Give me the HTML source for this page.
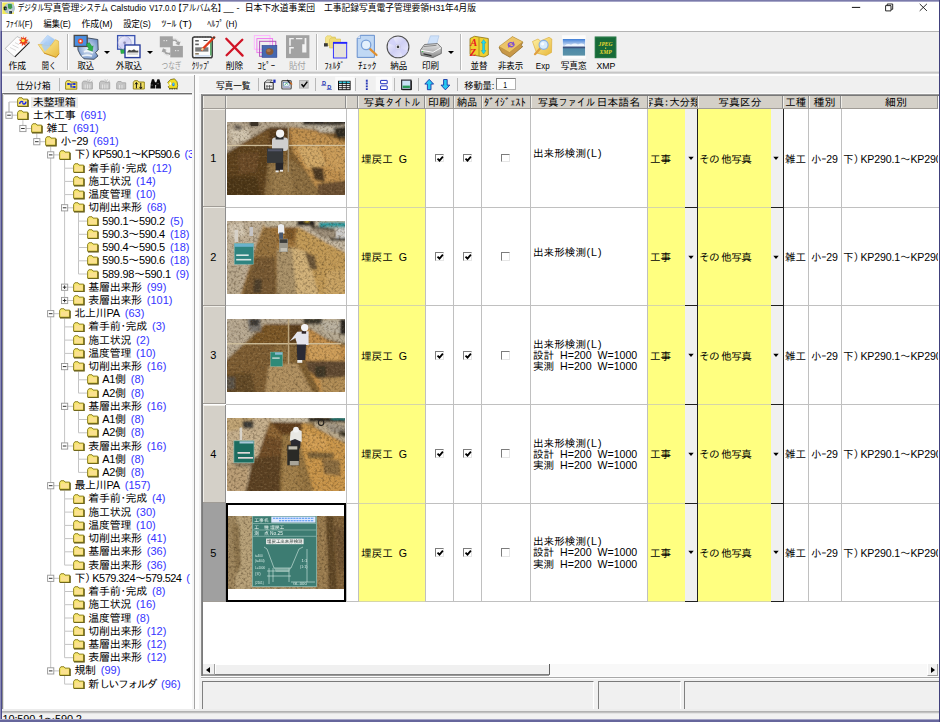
<!DOCTYPE html><html lang="ja"><head><meta charset="utf-8"><title>Calstudio</title><style>
html,body{margin:0;padding:0;}
body{width:940px;height:722px;overflow:hidden;background:#f0f0f0;position:relative;font-family:"Liberation Sans","IPAGothic",sans-serif;font-size:11px;color:#000;}
.abs{position:absolute;}
#win{position:absolute;left:0;top:0;width:940px;height:722px;overflow:hidden;background:#f0f0f0;}
#titlebar{left:0;top:0;width:940px;height:31px;background:#fff;}
#title{left:17px;top:1px;font-family:"Liberation Sans","Noto Sans CJK JP",sans-serif;font-size:9.4px;line-height:13px;white-space:nowrap;color:#000;}
.menu{top:17px;font-family:"Liberation Sans","Noto Sans CJK JP",sans-serif;font-size:8.6px;line-height:13px;white-space:nowrap;color:#000;}
.tb1{top:32px;height:40px;}
.tbl{position:absolute;top:59px;font-family:"Liberation Sans","Noto Sans CJK JP",sans-serif;font-size:9.4px;line-height:12px;white-space:nowrap;text-align:center;width:40px;margin-left:-20px;color:#000;}
.tbl.dis{color:#9a9a9a;}
.sep{position:absolute;width:1px;background:#b8b8b8;}
.tree{left:4px;top:94px;width:186px;height:615px;background:#fff;overflow:hidden;}
.tr{position:absolute;white-space:nowrap;font-size:11px;line-height:13px;height:13px;letter-spacing:-0.3px;}
.tr .c{color:#3434ff;letter-spacing:0;margin-left:5px;}
.fold{position:absolute;}
.ln{position:absolute;background:#c6c6c6;}
.box{position:absolute;width:5.700px;height:5.700px;border:1px solid #999;background:#fff;}
.box i{position:absolute;left:1px;top:2.300px;width:3.700px;height:1.100px;background:#333;}
.box b{position:absolute;left:2.300px;top:1px;width:1.100px;height:3.700px;background:#333;}
.cell{position:absolute;white-space:nowrap;font-size:10.6px;line-height:12px;}
.hd{position:absolute;top:95.500px;height:13.200px;background:#d4d0c8;border-right:1px solid #8e8e8e;border-bottom:1px solid #a09c96;box-shadow:inset 1px 0 0 #f0eee8;text-align:center;font-size:11.5px;line-height:12px;white-space:nowrap;overflow:hidden;box-sizing:border-box;}
.cb{position:absolute;width:9.200px;height:8.800px;border:1px solid #e6e6e6;border-top:1.300px solid #7c7c7c;border-left:1.300px solid #7c7c7c;background:#fff;box-sizing:border-box;}
.dd{position:absolute;width:0;height:0;border-left:2.800px solid transparent;border-right:2.800px solid transparent;border-top:3.200px solid #000;}
</style></head><body><div id="win">
<svg width="0" height="0" style="position:absolute"><defs><filter id="b1" x="-10%" y="-10%" width="120%" height="120%"><feGaussianBlur stdDeviation="0.9"/></filter><filter id="b2" x="-10%" y="-10%" width="120%" height="120%"><feGaussianBlur stdDeviation="0.6"/></filter><filter id="nz" x="0" y="0" width="100%" height="100%" color-interpolation-filters="sRGB"><feTurbulence type="fractalNoise" baseFrequency="0.42" numOctaves="2" seed="7"/><feColorMatrix type="matrix" values="0 0 0 0 0.2  0 0 0 0 0.14  0 0 0 0 0.06  1.1 0 0 0 -0.5"/></filter><filter id="nz2" x="0" y="0" width="100%" height="100%" color-interpolation-filters="sRGB"><feTurbulence type="fractalNoise" baseFrequency="0.5" numOctaves="2" seed="3"/><feColorMatrix type="matrix" values="0 0 0 0 1  0 0 0 0 0.9  0 0 0 0 0.7  0 2.0 0 0 -0.95"/></filter></defs></svg>
<div id="titlebar" class="abs"></div>
<svg class="abs" style="left:2px;top:1.500px" width="12.500" height="12.500" viewBox="2 1.500 12.500 12.500"><rect x="2.300" y="2" width="11.600" height="11.700" fill="#f2ea58"/><circle cx="9.500" cy="7.800" r="5.500" fill="#b2c6cc"/><path d="M7.900 3.600h3.800l0.600 3.600-1.800 1.600-2.400-1z" fill="#3a9a4a"/><path d="M8.200 9.500l3.600-0.600 1 3.200-2.200 1.400-2.600-1z" fill="#d8d8d8"/><rect x="3.700" y="6" width="2.900" height="3.700" rx="0.800" fill="#1c1c1c"/><path d="M9.200 10.600h2.800v2.600h-2.800z" fill="#26262a"/><rect x="9.300" y="11.200" width="1.200" height="1.300" fill="#1a8aa0"/><rect x="5" y="7.300" width="1.200" height="1.600" fill="#3aa860"/></svg>
<svg class="abs" style="left:17.0px;top:-0.6px;overflow:visible" width="467.0" height="16.8"><text y="11.8" font-family="'Liberation Sans','Noto Sans CJK JP',sans-serif" font-size="8.80" fill="#000"><tspan x="0.7" textLength="26.3" lengthAdjust="spacingAndGlyphs">デジタル</tspan><tspan x="26.8" textLength="35.5" lengthAdjust="spacingAndGlyphs">写真管理</tspan><tspan x="62.3" textLength="28.7" lengthAdjust="spacingAndGlyphs">システム</tspan><tspan x="93.4" textLength="35.6" lengthAdjust="spacingAndGlyphs">Calstudio</tspan><tspan x="132.2" textLength="26.5" lengthAdjust="spacingAndGlyphs">V17.0.0</tspan><tspan x="157.6" textLength="50.4" lengthAdjust="spacingAndGlyphs">【アルバム名】</tspan><tspan x="206.4" textLength="10.2" lengthAdjust="spacingAndGlyphs">__</tspan><tspan x="219.5" textLength="3.0" lengthAdjust="spacingAndGlyphs">-</tspan><tspan x="227.7" textLength="70.3" lengthAdjust="spacingAndGlyphs">日本下水道事業団</tspan><tspan x="307.0" textLength="105.0" lengthAdjust="spacingAndGlyphs">工事記録写真電子管理要領</tspan><tspan x="412.2" textLength="46.8" lengthAdjust="spacingAndGlyphs">H31年4月版</tspan></text></svg>
<svg class="abs" style="left:840px;top:0" width="100" height="16" viewBox="0 0 100 16"><path d="M11.900 7.400h8.300" stroke="#111" stroke-width="1" fill="none"/><path d="M45.600 5.600h5.400v5.300h-5.400z M47.200 5.400v-1.400h5.500v5.300h-1.500" stroke="#111" stroke-width="0.900" fill="none"/><path d="M79.700 3.900l7.200 7M86.900 3.900l-7.200 7" stroke="#111" stroke-width="0.900" fill="none"/></svg>
<svg class="abs" style="left:5.0px;top:15.4px;overflow:visible" width="239.0" height="16.8"><text y="11.8" font-family="'Liberation Sans','Noto Sans CJK JP',sans-serif" font-size="8.80" fill="#000"><tspan x="0.8" textLength="26.7" lengthAdjust="spacingAndGlyphs">ﾌｧｲﾙ(F)</tspan><tspan x="38.6" textLength="27.2" lengthAdjust="spacingAndGlyphs">編集(E)</tspan><tspan x="76.5" textLength="31.0" lengthAdjust="spacingAndGlyphs">作成(M)</tspan><tspan x="118.2" textLength="27.6" lengthAdjust="spacingAndGlyphs">設定(S)</tspan><tspan x="156.5" textLength="30.2" lengthAdjust="spacingAndGlyphs">ﾂｰﾙ (T)</tspan><tspan x="202.2" textLength="30.0" lengthAdjust="spacingAndGlyphs">ﾍﾙﾌﾟ (H)</tspan></text></svg>
<div class="abs" style="left:0;top:31px;width:940px;height:1px;background:#b4b4b4"></div>
<div class="abs" style="left:0;top:32px;width:940px;height:40px;background:#f0f0f0"></div>
<div class="abs" style="left:0;top:71px;width:940px;height:1px;background:#dedede"></div>
<div class="abs" style="left:0;top:72px;width:940px;height:1px;background:#c6c6c6"></div>
<div class="abs" style="left:0;top:73px;width:940px;height:1px;background:#d6d6d6"></div>
<svg class="abs" style="left:0;top:32px" width="940" height="40" viewBox="0 32 940 40"><defs><linearGradient id="gy" x1="0" y1="0" x2="1" y2="1"><stop offset="0" stop-color="#fff3a8"/><stop offset="1" stop-color="#e8b83a"/></linearGradient><linearGradient id="gb" x1="0" y1="0" x2="1" y2="1"><stop offset="0" stop-color="#dcebff"/><stop offset="1" stop-color="#7fb2ea"/></linearGradient><linearGradient id="gcd" x1="0" y1="0" x2="1" y2="1"><stop offset="0" stop-color="#ffffff"/><stop offset="0.5" stop-color="#cfcff4"/><stop offset="1" stop-color="#f4f4ff"/></linearGradient><linearGradient id="gsky" x1="0" y1="0" x2="0" y2="1"><stop offset="0" stop-color="#3f7fd8"/><stop offset="0.42" stop-color="#d8e4f4"/><stop offset="0.5" stop-color="#3a4a78"/><stop offset="0.6" stop-color="#4f8aa8"/><stop offset="1" stop-color="#5a92a8"/></linearGradient><linearGradient id="gpr" x1="0" y1="0" x2="0" y2="1"><stop offset="0" stop-color="#e8e8e8"/><stop offset="1" stop-color="#8a8a8a"/></linearGradient><radialGradient id="gcl" cx="0.5" cy="0.5" r="0.6"><stop offset="0" stop-color="#e6eef8"/><stop offset="1" stop-color="#6a8ec6"/></radialGradient></defs><g><path d="M15.2 57.2 L29.6 43 L29.2 41.6 L14 56 Z" fill="#101010"/><path d="M5.2 48.5 L17.1 36.6 L29 42.3 L14.3 56.6 Z" fill="#fdfdfd" stroke="#9a9a9a" stroke-width="0.6"/><path d="M10 47.5l6 3M12.5 45l6 3M15 42.6l4 2" stroke="#c8c8c8" stroke-width="0.7"/><path d="M23.1 35.6l1 2.6 2.4-1.4-.6 2.7 2.8.2-2.2 1.8 1.8 2.1-2.8-.2.1 2.8-1.9-2-1.9 2 .1-2.8-2.8.3 1.8-2.2-2.2-1.7 2.8-.3-.6-2.7 2.4 1.4z" fill="#e8401a"/><circle cx="23.1" cy="40.6" r="1.7" fill="#ffe040"/></g><g><path d="M40.3 43.6 L47.6 35.2 L54.7 39.7 L47 50.6 Z" fill="url(#gb)" stroke="#9cc4f0" stroke-width="0.5"/><path d="M38.2 44.5 L44.1 53.1 L56.1 57.3 L59 53.8 L58.5 41.1 L55.4 39.7 L50.8 45.8 Z" fill="url(#gy)" stroke="#d8a830" stroke-width="0.6"/><path d="M41.5 45.5 L46.5 41.2 L50.5 45.9 L45 51.5 Z" fill="#a8ccf4" opacity="0.85"/><path d="M44.1 53.1 L56.1 57.3 L59 53.8" fill="none" stroke="#c89020" stroke-width="0.9"/></g><g><path d="M77.6 40 L88 38 L97.8 39.5 L98.2 50 L95.5 52.5 L98 56 L94 59.3 L84 58.8 L80.5 55 L78 50 Z" fill="url(#gcl)" stroke="#3a4658" stroke-width="0.9"/><path d="M84 52c3-2 6-1 9 1M82 56c3-1 7-1 10 0" stroke="#f4f8fc" stroke-width="1.800" fill="none" opacity="0.900"/><rect x="74.2" y="35.4" width="13" height="11" fill="#4a8ee0" stroke="#484848" stroke-width="1.3"/><circle cx="80.5" cy="41.2" r="2.6" fill="#e84a28"/><circle cx="80.5" cy="41.2" r="1.1" fill="#fff"/><path d="M86.2 44.2 L89.3 42.6 L92 46.6 L93.2 45.8 L92.4 51.2 L87.4 49.6 L88.8 48.7 Z" fill="#2cb04a" stroke="#1a7a30" stroke-width="0.4"/></g><g><rect x="117.6" y="35.6" width="17.2" height="13.6" fill="#e8ecfa" stroke="#3a52b0" stroke-width="1.3"/><circle cx="124.6" cy="42.8" r="6.6" fill="url(#gcd)" stroke="#9a9ac8" stroke-width="0.6"/><circle cx="124.6" cy="42.8" r="1.3" fill="#8a8ab0"/><path d="M120.5 49.6 L124.8 50 L124 48.2 L128.4 51.4 L125.6 55 L125.2 53.2 L121 53.6 Z" fill="#2cb04a" stroke="#1a7a30" stroke-width="0.4"/><rect x="125" y="45" width="15" height="12.6" fill="#fdfdfd" stroke="#2a3e9c" stroke-width="1.4"/><path d="M127 52.2 L129 49.8 L131.5 50.6 L134 49.2 L136 50.8 L138.3 50.4 L138.3 52.6 L127 52.6 Z" fill="#484848"/><rect x="127" y="53.4" width="11" height="1.2" fill="#c8c8c8"/></g><g fill="#a2a2a2"><rect x="159.8" y="36.3" width="13" height="11"/><rect x="170.3" y="45.9" width="12.6" height="11.5"/><path d="M171.5 39.5c3-1.8 6-.8 7.5 2.6l1.6-.6-1.4 4-3.8-1.8 1.5-.7c-1-2-3-2.4-5-1.4z" /><path d="M170.5 54.5c-3 1.600-6 .6-7.300-2.800l-1.600.6 1.400-4 3.800 1.800-1.500.7c1 2 3 2.400 5 1.400z"/></g><path d="M173.2 39.200c2.200-1 4-.2 5 2.200M168.800 54.600c-2.200 1-4 .2-5-2.200" stroke="#e4e4e4" stroke-width="1.300" fill="none"/><rect x="163.500" y="40" width="1.200" height="1.200" fill="#e4e4e4"/><rect x="166" y="40" width="1.200" height="1.200" fill="#e4e4e4"/><rect x="175" y="50" width="1.200" height="1.200" fill="#e4e4e4"/><rect x="177.500" y="50" width="1.200" height="1.200" fill="#e4e4e4"/><g><rect x="192.6" y="37" width="19.6" height="20.8" rx="1.8" fill="#fcfcfc" stroke="#3c3c3c" stroke-width="1.5"/><path d="M194 37h17" stroke="#3c3c3c" stroke-width="1.2" stroke-dasharray="0.8 0.8"/><rect x="210.2" y="41" width="1.3" height="14.500" fill="#3a9a4a"/><rect x="195.2" y="40" width="3.6" height="1.600" fill="#606060"/><rect x="195.2" y="43.600" width="3.600" height="1.600" fill="#606060"/><rect x="203.500" y="40" width="4" height="1" fill="#404040"/><rect x="195.2" y="47.3" width="13.2" height="4.300" fill="#7a7a7a"/><rect x="195.2" y="53" width="3.600" height="1.600" fill="#8a7a60"/><rect x="195" y="55.200" width="14.800" height="1.400" fill="#c8d8ee"/><path d="M214.300 37.300 L202 49.600" stroke="#e03818" stroke-width="2.200" stroke-linecap="round"/><path d="M203.300 48.300 L201.600 50" stroke="#f0d8a0" stroke-width="2"/><path d="M214.600 37 L213.400 38.200" stroke="#404040" stroke-width="2.200"/></g><path d="M226.300 38.800 L242.600 55.600 M242.300 39.800 L226.600 55.200" stroke="#d01426" stroke-width="2.300" stroke-linecap="round" fill="none"/><g fill="none"><rect x="254.300" y="35.600" width="15.700" height="13.600" stroke="#ffb0ff" stroke-width="0.900"/><rect x="256.900" y="38.600" width="15.700" height="14" stroke="#f070f0" stroke-width="0.900"/><rect x="259.600" y="41.300" width="16.200" height="15" stroke="#b050b8" stroke-width="1"/><rect x="262" y="45.300" width="14.900" height="12.200" fill="#4668b0" stroke="#2a3a8a" stroke-width="0.500"/><ellipse cx="269.600" cy="51.600" rx="3.800" ry="3.400" fill="#8a5a38"/><ellipse cx="268.600" cy="50.600" rx="2" ry="1.500" fill="#b07a50"/></g><g><rect x="286" y="35.200" width="23.400" height="22.900" fill="#a2a2a2"/><path d="M289.200 38h4.600v1.300h-3v6.500h-1.600zM296 38h6.400v1.300H296zM304.600 38h1.800v14.600h-1.800zM289.200 47h4.600v1.400h-3v5.400h-1.600zM302.200 44.300h2.400v8.300h-2.400z" fill="#f2f2f2"/></g><g><path d="M325.500 37.500 L327 35.800 L331 35.800 L332 37 L335.500 37 L335.500 45.500 L325.500 45.500 Z" fill="#f4e48a" stroke="#d8c050" stroke-width="0.500"/><path d="M329.500 39.500 L331 37.800 L335 37.800 L336 39 L340.500 39 L340.500 48 L329.500 48 Z" fill="#f0dc78" stroke="#d0b848" stroke-width="0.500"/><rect x="324" y="43.200" width="3.800" height="3.300" fill="#383838"/><rect x="333.400" y="43" width="13.300" height="15" fill="#e6e2da" stroke="#2424ff" stroke-width="0.900"/><rect x="333" y="41.900" width="14.200" height="1.700" fill="#2424ff"/></g><g><path d="M357.200 38.500 L360.400 35.300 L374.400 35.300 L374.400 57.400 L357.200 57.400 Z" fill="#c0d8f4" stroke="#5a86c8" stroke-width="0.900"/><path d="M357.200 38.500 L360.400 38.500 L360.400 35.300" fill="#e8f2ff" stroke="#5a86c8" stroke-width="0.600"/><path d="M369.600 48.600 L376.500 55" stroke="#e09030" stroke-width="2.300" stroke-linecap="round"/><circle cx="366.100" cy="44.900" r="4.700" fill="#e4f0fc" stroke="#7aa0d8" stroke-width="1.300"/></g><g><circle cx="398" cy="46.900" r="10.900" fill="url(#gcd)" stroke="#505050" stroke-width="1.100"/><path d="M398 46.900 L388 43 A10.900 10.900 0 0 1 393 37.500 Z" fill="#d0d0f8" opacity="0.800"/><path d="M398 46.900 L408 51 A10.900 10.900 0 0 1 403 56.500 Z" fill="#d0d0f8" opacity="0.800"/><circle cx="398" cy="46.900" r="2.600" fill="#f4f4ff" stroke="#b0b0d0" stroke-width="0.500"/><circle cx="398" cy="46.900" r="1.300" fill="#404040"/></g><g><path d="M427.500 44.500 L430.500 35.800 L439 35.800 L436.500 44.500 Z" fill="#cfe2fa" stroke="#9ab8e0" stroke-width="0.500"/><path d="M420.500 50 L424.500 44.500 L437.500 43.600 L441.300 47.500 L441.300 53.500 L433 57.500 L421 55.300 Z" fill="url(#gpr)" stroke="#5a5a5a" stroke-width="0.800"/><path d="M420.800 50.200 L433 52.300 L441 47.800" fill="none" stroke="#fafafa" stroke-width="1"/><path d="M423.500 53.300 L431.500 55 L431.500 56.300 L423.500 54.600 Z" fill="#303030"/><path d="M424 46.500 L436.500 45.300" stroke="#707070" stroke-width="0.800"/><circle cx="422.600" cy="51.600" r="0.700" fill="#30c040"/></g><g><path d="M470 38.500 L474.500 36.300 L488.300 38.500 L488.300 55 L484 57 L470 54.500 Z" fill="#f0d030" stroke="#8a7010" stroke-width="0.800"/><path d="M479 37.500 L479 56" stroke="#a08818" stroke-width="0.800"/><path d="M483.600 39.500 L486 43 L484.600 43 L484.600 50.500 L486 50.500 L483.600 54 L481.200 50.500 L482.600 50.500 L482.600 43 L481.200 43 Z" fill="#20d8f0" stroke="#1090b0" stroke-width="0.400"/><text x="470.300" y="46.300" font-family="'Liberation Serif',serif" font-style="italic" font-weight="bold" font-size="10.500" fill="#e81820">A</text><text x="469.800" y="56.200" font-family="'Liberation Serif',serif" font-style="italic" font-weight="bold" font-size="10.500" fill="#e81820">Z</text></g><g><path d="M499 47.500 L512.500 37 L522.800 42.500 L521 45.500 L522.800 46.500 L510 57.300 L502 52.800 Z" fill="#c89848" stroke="#8a6420" stroke-width="0.700"/><path d="M499 46.500 L512.500 36.500 L522.800 41.800 L509.500 52.500 Z" fill="#ecc468" stroke="#b08830" stroke-width="0.500"/><path d="M507.500 44.800c.5-2.400 3-3.600 5.400-2.400l.6-1.200 1.200 3.200-3.400.4.700-1.200c-1.500-.7-2.800 0-3.200 1.400zM514.800 44.600c-.5 2.400-3 3.600-5.400 2.400l-.6 1.200-1.200-3.200 3.400-.4-.7 1.200c1.500.7 2.800 0 3.200-1.400z" fill="#8050d0"/></g><g><path d="M532.500 41.500 L538 39 L540.500 41 L549 37.300 L551.800 39 L551.500 52.500 L546 55.500 L536.500 53 Z" fill="url(#gy)" stroke="#d8a830" stroke-width="0.600"/><path d="M540.400 48.300 L535 54.200" stroke="#e0a040" stroke-width="2.200" stroke-linecap="round"/><circle cx="543.600" cy="44.800" r="4.500" fill="#d8ecfc" stroke="#8ab0e0" stroke-width="1.200"/><circle cx="542.600" cy="43.800" r="1.600" fill="#fff" opacity="0.800"/></g><g><rect x="562.100" y="35.200" width="23.600" height="23.600" fill="#fcfcfc"/><rect x="562.800" y="39" width="22.300" height="16.600" fill="url(#gsky)"/><path d="M565 45.400c2-1.600 4-1.600 6-.6 2-1.400 5-1.600 7-.4 2-1 4-1.400 6-.2v1.800h-19z" fill="#f4f8ff" opacity="0.900"/></g><g><rect x="594.700" y="36.500" width="21.700" height="21.700" fill="#176a38"/><rect x="595.700" y="37.500" width="19.700" height="19.700" fill="none" stroke="#3a8a58" stroke-width="0.400"/><text x="605.600" y="46.300" text-anchor="middle" font-family="'Liberation Serif',serif" font-style="italic" font-weight="bold" font-size="5.600" fill="#e8d830">JPEG</text><text x="605.600" y="54" text-anchor="middle" font-family="'Liberation Serif',serif" font-style="italic" font-weight="bold" font-size="5.600" fill="#e8d830">XMP</text><rect x="605" y="47.600" width="1.200" height="1.200" fill="#e8d830"/></g></svg>
<svg class="abs" style="left:0.0px;top:56.5px;overflow:visible" width="624.0" height="16.8"><text y="11.8" font-family="'Liberation Sans','Noto Sans CJK JP',sans-serif" font-size="8.80" fill="#000"><tspan x="8.5" textLength="17.6" lengthAdjust="spacingAndGlyphs">作成</tspan><tspan x="41.8" textLength="14.4" lengthAdjust="spacingAndGlyphs">開く</tspan><tspan x="77.4" textLength="16.7" lengthAdjust="spacingAndGlyphs">取込</tspan><tspan x="115.7" textLength="26.3" lengthAdjust="spacingAndGlyphs">外取込</tspan><tspan x="191.7" textLength="19.1" lengthAdjust="spacingAndGlyphs">ｸﾘｯﾌﾟ</tspan><tspan x="225.7" textLength="17.4" lengthAdjust="spacingAndGlyphs">削除</tspan><tspan x="257.6" textLength="17.4" lengthAdjust="spacingAndGlyphs">ｺﾋﾟｰ</tspan><tspan x="324.4" textLength="20.1" lengthAdjust="spacingAndGlyphs">ﾌｫﾙﾀﾞ</tspan><tspan x="357.9" textLength="18.5" lengthAdjust="spacingAndGlyphs">ﾁｪｯｸ</tspan><tspan x="390.3" textLength="16.9" lengthAdjust="spacingAndGlyphs">納品</tspan><tspan x="421.9" textLength="17.0" lengthAdjust="spacingAndGlyphs">印刷</tspan><tspan x="470.4" textLength="17.0" lengthAdjust="spacingAndGlyphs">並替</tspan><tspan x="497.9" textLength="25.3" lengthAdjust="spacingAndGlyphs">非表示</tspan><tspan x="535.8" textLength="13.8" lengthAdjust="spacingAndGlyphs">Exp</tspan><tspan x="560.7" textLength="25.9" lengthAdjust="spacingAndGlyphs">写真窓</tspan><tspan x="596.4" textLength="18.9" lengthAdjust="spacingAndGlyphs">XMP</tspan></text></svg>
<svg class="abs" style="left:0.0px;top:56.5px;overflow:visible" width="624.0" height="16.8"><text y="11.8" font-family="'Liberation Sans','Noto Sans CJK JP',sans-serif" font-size="8.80" fill="#a0a0a0"><tspan x="161.5" textLength="20.0" lengthAdjust="spacingAndGlyphs">つなぎ</tspan><tspan x="288.9" textLength="16.9" lengthAdjust="spacingAndGlyphs">貼付</tspan></text></svg>
<div class="dd" style="left:104.1px;top:51px;border-left-width:3px;border-right-width:3px;border-top-width:3px"></div>
<div class="dd" style="left:146.9px;top:51px;border-left-width:3px;border-right-width:3px;border-top-width:3px"></div>
<div class="dd" style="left:448.1px;top:51px;border-left-width:3px;border-right-width:3px;border-top-width:3px"></div>
<div class="sep" style="left:67px;top:34px;height:36px"></div>
<div class="sep" style="left:68px;top:34px;height:36px;background:#fff"></div>
<div class="sep" style="left:316px;top:34px;height:36px"></div>
<div class="sep" style="left:317px;top:34px;height:36px;background:#fff"></div>
<div class="sep" style="left:460px;top:34px;height:36px"></div>
<div class="sep" style="left:461px;top:34px;height:36px;background:#fff"></div>
<div class="abs" style="left:0;top:74px;width:940px;height:2px;background:#fefefe"></div><div class="abs" style="left:0;top:76px;width:940px;height:18px;background:#f0f0f0"></div>
<div class="abs" style="left:194px;top:75px;width:1px;height:636px;background:#a4a4a4"></div>
<div class="abs" style="left:195px;top:75px;width:4px;height:636px;background:#fcfcfc"></div>
<svg class="abs" style="left:0;top:74px" width="940" height="20" viewBox="0 74 940 20"><rect x="335.200" y="76.800" width="19.400" height="14.600" fill="#fafafa"/><rect x="375.800" y="76.500" width="16.200" height="15" fill="#fafafa"/><path d="M65.6 82.4 l1.200-1.700 h3.200 l1 1.300 h5.8 v7.2 h-11.2 z" fill="#f4e264" stroke="#8a7a10" stroke-width="0.900"/><path d="M68.500 84h2.500v3h3M71 84h3" stroke="#1a30d8" stroke-width="1.200" fill="none"/><rect x="67.300" y="83" width="2.200" height="2" fill="#1a30d8"/><rect x="73.300" y="83" width="2.200" height="2" fill="#1a30d8"/><rect x="73.300" y="86" width="2.200" height="2" fill="#1a30d8"/><path d="M82.2 82.8 l1.200-1.700 h3.200 l1 1.300 h4.8 v6.6 h-10.2 z" fill="#c4c4c4" stroke="#a8a8a8" stroke-width="0.900"/><path d="M90.2 79.500l-1.500 2.500M87.7 79.300l.3 2.600M92.7 80.800l-2.400 1.600" stroke="#b4b4b4" stroke-width="0.800"/><path d="M85.2 84.500v4M87.5 84.500v4M89.8 84.500v4" stroke="#e8e8e8" stroke-width="0.900"/><path d="M99.5 82.8 l1.200-1.700 h3.200 l1 1.300 h4.8 v6.6 h-10.2 z" fill="#c4c4c4" stroke="#a8a8a8" stroke-width="0.900"/><path d="M107.5 79.500l-1.500 2.500M105.0 79.300l.3 2.600M110.0 80.800l-2.400 1.600" stroke="#b4b4b4" stroke-width="0.800"/><path d="M102.5 84.500v4M104.8 84.500v4M107.1 84.500v4" stroke="#e8e8e8" stroke-width="0.900"/><path d="M116.7 83.2 l1.200-1.700 h3.200 l1 1.300 h3.6 v6.2 h-9.0 z" fill="#c4c4c4" stroke="#a8a8a8" stroke-width="0.900"/><path d="M119.500 85v3.500M122 85v3.500" stroke="#e8e8e8" stroke-width="0.900"/><path d="M133.3 82.4 l1.200-1.700 h3.200 l1 1.300 h5.6 v7.0 h-11.0 z" fill="#f4e264" stroke="#8a7a10" stroke-width="0.900"/><path d="M136.400 88.300v-5.600m-1.300 1.600l1.300-1.800 1.300 1.800M140.800 82.900v5.400m-1.300-1.400l1.300 1.800 1.300-1.800" stroke="#101010" stroke-width="1" fill="none"/><path d="M152 79.200h2l1.100 3.400 .300 6h-5l.400-5.400z" fill="#0a0a0a"/><path d="M157.400 79.200h2l1.200 4 .400 5.400h-5l.300-6z" fill="#0a0a0a"/><rect x="154.600" y="82.300" width="2.200" height="2.700" fill="#0a0a0a"/><rect x="151.600" y="84.600" width="0.900" height="1" fill="#999"/><rect x="157.600" y="83.200" width="0.900" height="1" fill="#999"/><path d="M170.500 79.600 l4-0.800 2.600 3 0.600 3.600 -0.600 3 h-7.600 l-1.400-1.600 2-1.800 -2.400-2.600 z" fill="#f2de22" stroke="#5e5408" stroke-width="0.700"/><ellipse cx="170.300" cy="83.700" rx="1.500" ry="2" fill="#fafaf0" stroke="#f2de22" stroke-width="1"/><ellipse cx="173.400" cy="84.400" rx="1.200" ry="1.900" fill="#2a7af0"/><ellipse cx="173.600" cy="84" rx="0.600" ry="1" fill="#40e4f0"/><path d="M169 88.900h8.600" stroke="#4a4208" stroke-width="1" stroke-dasharray="1.600 0.800"/><rect x="264.600" y="82.500" width="8.600" height="6.600" fill="#f4f4f4" stroke="#303030" stroke-width="1.100"/><path d="M264.300 82.500l3-2.500h5l-2.500 2.500" fill="#d8d8d8" stroke="#404040" stroke-width="0.700"/><path d="M267 85v4M269.500 85v4M266 86.200h6" stroke="#404040" stroke-width="0.700"/><path d="M273.300 79.600h2.300v3.200h-2.300z" fill="#1a2ac0"/><rect x="281.800" y="80.600" width="9.400" height="8.400" rx="1" fill="#e4e4e4" stroke="#505050" stroke-width="1.200"/><rect x="283.500" y="82.300" width="5.600" height="3.800" fill="#fff" stroke="#3060a0" stroke-width="0.500"/><path d="M284.500 85l2-1.600 1.500 1" stroke="#28a060" stroke-width="0.900" fill="none"/><path d="M287.200 80l3.800 4" stroke="#202020" stroke-width="1.200"/><path d="M290 82.300l2.200 2.200" stroke="#e07020" stroke-width="1.100"/><path d="M283 87.600h7" stroke="#a0a0c8" stroke-width="0.900"/><rect x="299" y="80" width="9.700" height="8.600" fill="#b4b4b4"/><rect x="300" y="81" width="7.700" height="6.600" fill="#cecece"/><path d="M301.500 84.300l2 2.300 3.800-5" stroke="#000" stroke-width="1.500" fill="none"/><text x="322" y="84.600" font-family="'Liberation Sans',sans-serif" font-weight="bold" font-size="5.500" fill="#2030b0">D</text><path d="M321.300 85.300h5" stroke="#2030b0" stroke-width="0.700"/><text x="327.300" y="88.600" font-family="'Liberation Sans',sans-serif" font-weight="bold" font-size="5.500" fill="#2030b0">D</text><path d="M326.800 89.400h5" stroke="#2030b0" stroke-width="0.700"/><rect x="338.500" y="81.300" width="11.600" height="8.400" fill="#fff" stroke="#101010" stroke-width="1"/><rect x="339" y="81.600" width="10.600" height="1.600" fill="#30d0e8"/><path d="M338.500 83.600h11.600M338.500 85.600h11.600M338.500 87.700h11.600" stroke="#101010" stroke-width="0.900"/><path d="M342.300 81.300v8.400M346.300 81.300v8.400" stroke="#101010" stroke-width="0.800"/><path d="M366.800 79.800v10.200" stroke="#2030b0" stroke-width="1.900" stroke-dasharray="1.900 0.900"/><path d="M367.200 79.800v10.200" stroke="#8090e0" stroke-width="0.700" stroke-dasharray="1 1.800"/><rect x="380.600" y="80.400" width="6.600" height="3.300" rx="0.300" fill="#fff" stroke="#2030c0" stroke-width="1"/><rect x="380.600" y="85.900" width="6.600" height="3.600" rx="0.300" fill="#fff" stroke="#2030c0" stroke-width="1"/><rect x="401.600" y="80.100" width="9.300" height="9.200" fill="#c8e0f4" stroke="#303038" stroke-width="1.200"/><rect x="402.600" y="85.600" width="7.300" height="2.400" fill="#2a9a5a"/><path d="M411.300 80.600v9.100h-9" stroke="#101010" stroke-width="1" fill="none"/><path d="M429.200 79.300l4.400 4.800h-2.600v5.600h-3.600v-5.600h-2.600z" fill="#28c8f0" stroke="#1838a8" stroke-width="0.900"/><path d="M445.400 89.900l4.400-4.800h-2.600v-5.600h-3.600v5.600h-2.600z" fill="#28c8f0" stroke="#1838a8" stroke-width="0.900"/></svg>
<svg class="abs" style="left:0.0px;top:76.8px;overflow:visible" width="524.0" height="16.8"><text y="11.8" font-family="'Liberation Sans','Noto Sans CJK JP',sans-serif" font-size="8.80" fill="#000"><tspan x="16.2" textLength="34.4" lengthAdjust="spacingAndGlyphs">仕分け箱</tspan><tspan x="216.0" textLength="34.4" lengthAdjust="spacingAndGlyphs">写真一覧</tspan><tspan x="464.2" textLength="30.2" lengthAdjust="spacingAndGlyphs">移動量:</tspan></text></svg>
<div class="sep" style="left:59.0px;top:77.5px;height:13.5px"></div>
<div class="sep" style="left:258.0px;top:77.5px;height:13.5px"></div>
<div class="sep" style="left:315.0px;top:77.5px;height:13.5px"></div>
<div class="sep" style="left:355.0px;top:77.5px;height:13.5px"></div>
<div class="sep" style="left:394.0px;top:77.5px;height:13.5px"></div>
<div class="sep" style="left:417.5px;top:77.5px;height:13.5px"></div>
<div class="sep" style="left:456.5px;top:77.5px;height:13.5px"></div>
<div class="abs" style="left:495.5px;top:78px;width:20px;height:11.5px;background:#fff;border:1px solid #b0b0b0;border-top-color:#808080;border-left-color:#808080;box-sizing:border-box"></div>
<svg class="abs" style="left:500.0px;top:76.0px;overflow:visible" width="16.0" height="16.6"><text y="11.6" font-family="'Liberation Sans','Noto Sans CJK JP',sans-serif" font-size="8.60" fill="#000"><tspan x="3.2" textLength="3.8" lengthAdjust="spacingAndGlyphs">1</tspan></text></svg>
<div class="abs" style="left:2px;top:92px;width:190px;height:1px;background:#f8f8f8"></div>
<div class="abs" style="left:2px;top:93px;width:190px;height:1px;background:#6e6e6e"></div>
<div class="abs" style="left:2px;top:94px;width:190px;height:1px;background:#c4c4c4"></div>
<div class="abs" style="left:2px;top:93px;width:1px;height:616px;background:#8a8a8a"></div>
<div class="abs" style="left:3px;top:94px;width:1px;height:615px;background:#e4e4e4"></div>
<div class="abs tree" style="top:95px;height:614px;width:188px"><div class="abs" style="left:0;top:-1px;width:186px;height:616px">
<svg class="abs" style="left:0;top:0" width="186" height="615" viewBox="0 0 186 615">
<path d="M5.0 8.0h8.500M5.0 21.2h8.500M18.9 34.5h8.500M32.8 47.7h8.500M46.7 60.9h8.500M60.6 74.2h8.500M60.6 87.4h8.500M60.6 100.6h8.500M60.6 113.8h8.500M74.5 127.1h8.500M74.5 140.3h8.500M74.5 153.5h8.500M74.5 166.8h8.500M74.5 180.0h8.500M60.6 193.2h8.500M60.6 206.5h8.500M46.7 219.7h8.500M60.6 232.9h8.500M60.6 246.1h8.500M60.6 259.4h8.500M60.6 272.6h8.500M74.5 285.8h8.500M74.5 299.1h8.500M60.6 312.3h8.500M74.5 325.5h8.500M74.5 338.8h8.500M60.6 352.0h8.500M74.5 365.2h8.500M74.5 378.4h8.500M46.7 391.7h8.500M60.6 404.9h8.500M60.6 418.1h8.500M60.6 431.4h8.500M60.6 444.6h8.500M60.6 457.8h8.500M60.6 471.1h8.500M46.7 484.3h8.500M60.6 497.5h8.500M60.6 510.7h8.500M60.6 524.0h8.500M60.6 537.2h8.500M60.6 550.4h8.500M60.6 563.7h8.500M46.7 576.9h8.500M60.6 590.1h8.500M5.0 8.0V21.2M5.0 8.0V21.2M18.9 26.2V34.5M32.8 39.5V47.7M46.7 52.7V60.9M60.6 65.9V74.2M60.6 74.2V87.4M60.6 87.4V100.6M60.6 100.6V113.8M74.5 118.8V127.1M74.5 127.1V140.3M74.5 140.3V153.5M74.5 153.5V166.8M74.5 166.8V180.0M60.6 113.8V193.2M60.6 193.2V206.5M46.7 60.9V219.7M60.6 224.7V232.9M60.6 232.9V246.1M60.6 246.1V259.4M60.6 259.4V272.6M74.5 277.6V285.8M74.5 285.8V299.1M60.6 272.6V312.3M74.5 317.3V325.5M74.5 325.5V338.8M60.6 312.3V352.0M74.5 357.0V365.2M74.5 365.2V378.4M46.7 219.7V391.7M60.6 396.7V404.9M60.6 404.9V418.1M60.6 418.1V431.4M60.6 431.4V444.6M60.6 444.6V457.8M60.6 457.8V471.1M46.7 391.7V484.3M60.6 489.3V497.5M60.6 497.5V510.7M60.6 510.7V524.0M60.6 524.0V537.2M60.6 537.2V550.4M60.6 550.4V563.7M46.7 484.3V576.9M60.6 581.9V590.1" stroke="#c4c4c4" stroke-width="1" fill="none"/>
<rect x="1.9" y="18.1" width="6.200" height="6.200" fill="#fff" stroke="#969696" stroke-width="0.900"/>
<path d="M3.2 21.2h3.600" stroke="#303030" stroke-width="1" fill="none"/>
<rect x="15.8" y="31.4" width="6.200" height="6.200" fill="#fff" stroke="#969696" stroke-width="0.900"/>
<path d="M17.1 34.5h3.600" stroke="#303030" stroke-width="1" fill="none"/>
<rect x="29.7" y="44.6" width="6.200" height="6.200" fill="#fff" stroke="#969696" stroke-width="0.900"/>
<path d="M31.0 47.7h3.600" stroke="#303030" stroke-width="1" fill="none"/>
<rect x="43.6" y="57.8" width="6.200" height="6.200" fill="#fff" stroke="#969696" stroke-width="0.900"/>
<path d="M44.9 60.9h3.600" stroke="#303030" stroke-width="1" fill="none"/>
<rect x="57.5" y="110.7" width="6.200" height="6.200" fill="#fff" stroke="#969696" stroke-width="0.900"/>
<path d="M58.8 113.8h3.600" stroke="#303030" stroke-width="1" fill="none"/>
<rect x="57.5" y="190.1" width="6.200" height="6.200" fill="#fff" stroke="#969696" stroke-width="0.900"/>
<path d="M58.8 193.2h3.600M60.6 191.4v3.600" stroke="#303030" stroke-width="1" fill="none"/>
<rect x="57.5" y="203.4" width="6.200" height="6.200" fill="#fff" stroke="#969696" stroke-width="0.900"/>
<path d="M58.8 206.5h3.600M60.6 204.7v3.600" stroke="#303030" stroke-width="1" fill="none"/>
<rect x="43.6" y="216.6" width="6.200" height="6.200" fill="#fff" stroke="#969696" stroke-width="0.900"/>
<path d="M44.9 219.7h3.600" stroke="#303030" stroke-width="1" fill="none"/>
<rect x="57.5" y="269.5" width="6.200" height="6.200" fill="#fff" stroke="#969696" stroke-width="0.900"/>
<path d="M58.8 272.6h3.600" stroke="#303030" stroke-width="1" fill="none"/>
<rect x="57.5" y="309.2" width="6.200" height="6.200" fill="#fff" stroke="#969696" stroke-width="0.900"/>
<path d="M58.8 312.3h3.600" stroke="#303030" stroke-width="1" fill="none"/>
<rect x="57.5" y="348.9" width="6.200" height="6.200" fill="#fff" stroke="#969696" stroke-width="0.900"/>
<path d="M58.8 352.0h3.600" stroke="#303030" stroke-width="1" fill="none"/>
<rect x="43.6" y="388.6" width="6.200" height="6.200" fill="#fff" stroke="#969696" stroke-width="0.900"/>
<path d="M44.9 391.7h3.600" stroke="#303030" stroke-width="1" fill="none"/>
<rect x="43.6" y="481.2" width="6.200" height="6.200" fill="#fff" stroke="#969696" stroke-width="0.900"/>
<path d="M44.9 484.3h3.600" stroke="#303030" stroke-width="1" fill="none"/>
<rect x="43.6" y="573.8" width="6.200" height="6.200" fill="#fff" stroke="#969696" stroke-width="0.900"/>
<path d="M44.9 576.9h3.600" stroke="#303030" stroke-width="1" fill="none"/>
</svg>
<svg class="fold" style="left:13.1px;top:2.6px" width="12" height="10.500" viewBox="0 0 12 10" preserveAspectRatio="none"><path d="M0.6 2.4 L1.9 0.7 H5 L6 2 H10.6 V8.8 H0.6 Z" fill="#f7e76e" stroke="#857818" stroke-width="0.9"/><path d="M2 3.4 H9.4 V7.8 H2 Z" fill="#fcdf96" opacity="0.85"/><path d="M11.2 2.6 V9.4 H1" fill="none" stroke="#5e540a" stroke-width="1.1"/><path d="M2.6 6.6c.2-2.4 2.4-3 3.4-1.400M9 4.400c-.2 2.400-2.400 3-3.400 1.400" stroke="#1a2ae8" stroke-width="1.500" fill="none"/></svg>
<div class="tr" style="left:28.7px;top:1.5px;background:linear-gradient(#fff 0,#fff 1.200px,#ebebeb 1.200px,#ebebeb 12px,#fff 12px);padding:0 2px 0 1.500px;margin-left:-1.500px">未整理箱</div>
<svg class="fold" style="left:13.1px;top:15.8px" width="12" height="10.500" viewBox="0 0 12 10" preserveAspectRatio="none"><path d="M0.6 2.4 L1.9 0.7 H5 L6 2 H10.6 V8.8 H0.6 Z" fill="#f7e76e" stroke="#857818" stroke-width="0.9"/><path d="M2 3.4 H9.4 V7.8 H2 Z" fill="#fcdf96" opacity="0.85"/><path d="M11.2 2.6 V9.4 H1" fill="none" stroke="#5e540a" stroke-width="1.1"/></svg>
<div class="tr" style="left:28.7px;top:14.7px">土木工事<span class="c">(691)</span></div>
<svg class="fold" style="left:27.0px;top:29.1px" width="12" height="10.500" viewBox="0 0 12 10" preserveAspectRatio="none"><path d="M0.6 2.4 L1.9 0.7 H5 L6 2 H10.6 V8.8 H0.6 Z" fill="#f7e76e" stroke="#857818" stroke-width="0.9"/><path d="M2 3.4 H9.4 V7.8 H2 Z" fill="#fcdf96" opacity="0.85"/><path d="M11.2 2.6 V9.4 H1" fill="none" stroke="#5e540a" stroke-width="1.1"/></svg>
<div class="tr" style="left:42.6px;top:28.0px">雑工<span class="c">(691)</span></div>
<svg class="fold" style="left:40.9px;top:42.3px" width="12" height="10.500" viewBox="0 0 12 10" preserveAspectRatio="none"><path d="M0.6 2.4 L1.9 0.7 H5 L6 2 H10.6 V8.8 H0.6 Z" fill="#f7e76e" stroke="#857818" stroke-width="0.9"/><path d="M2 3.4 H9.4 V7.8 H2 Z" fill="#fcdf96" opacity="0.85"/><path d="M11.2 2.6 V9.4 H1" fill="none" stroke="#5e540a" stroke-width="1.1"/></svg>
<div class="tr" style="left:56.5px;top:41.2px">小ｰ29<span class="c">(691)</span></div>
<svg class="fold" style="left:54.8px;top:55.5px" width="12" height="10.500" viewBox="0 0 12 10" preserveAspectRatio="none"><path d="M0.6 2.4 L1.9 0.7 H5 L6 2 H10.6 V8.8 H0.6 Z" fill="#f7e76e" stroke="#857818" stroke-width="0.9"/><path d="M2 3.4 H9.4 V7.8 H2 Z" fill="#fcdf96" opacity="0.85"/><path d="M11.2 2.6 V9.4 H1" fill="none" stroke="#5e540a" stroke-width="1.1"/></svg>
<div class="tr" style="left:70.4px;top:54.4px">下<span style="margin-right:-3.500px">）</span><span style="letter-spacing:-0.550px">KP590.1～KP590.6</span><span class="c">(3</span></div>
<svg class="fold" style="left:68.7px;top:68.8px" width="12" height="10.500" viewBox="0 0 12 10" preserveAspectRatio="none"><path d="M0.6 2.4 L1.9 0.7 H5 L6 2 H10.6 V8.8 H0.6 Z" fill="#f7e76e" stroke="#857818" stroke-width="0.9"/><path d="M2 3.4 H9.4 V7.8 H2 Z" fill="#fcdf96" opacity="0.85"/><path d="M11.2 2.6 V9.4 H1" fill="none" stroke="#5e540a" stroke-width="1.1"/></svg>
<div class="tr" style="left:84.3px;top:67.7px">着手前･完成<span class="c">(12)</span></div>
<svg class="fold" style="left:68.7px;top:82.0px" width="12" height="10.500" viewBox="0 0 12 10" preserveAspectRatio="none"><path d="M0.6 2.4 L1.9 0.7 H5 L6 2 H10.6 V8.8 H0.6 Z" fill="#f7e76e" stroke="#857818" stroke-width="0.9"/><path d="M2 3.4 H9.4 V7.8 H2 Z" fill="#fcdf96" opacity="0.85"/><path d="M11.2 2.6 V9.4 H1" fill="none" stroke="#5e540a" stroke-width="1.1"/></svg>
<div class="tr" style="left:84.3px;top:80.9px">施工状況<span class="c">(14)</span></div>
<svg class="fold" style="left:68.7px;top:95.2px" width="12" height="10.500" viewBox="0 0 12 10" preserveAspectRatio="none"><path d="M0.6 2.4 L1.9 0.7 H5 L6 2 H10.6 V8.8 H0.6 Z" fill="#f7e76e" stroke="#857818" stroke-width="0.9"/><path d="M2 3.4 H9.4 V7.8 H2 Z" fill="#fcdf96" opacity="0.85"/><path d="M11.2 2.6 V9.4 H1" fill="none" stroke="#5e540a" stroke-width="1.1"/></svg>
<div class="tr" style="left:84.3px;top:94.1px">温度管理<span class="c">(10)</span></div>
<svg class="fold" style="left:68.7px;top:108.4px" width="12" height="10.500" viewBox="0 0 12 10" preserveAspectRatio="none"><path d="M0.6 2.4 L1.9 0.7 H5 L6 2 H10.6 V8.8 H0.6 Z" fill="#f7e76e" stroke="#857818" stroke-width="0.9"/><path d="M2 3.4 H9.4 V7.8 H2 Z" fill="#fcdf96" opacity="0.85"/><path d="M11.2 2.6 V9.4 H1" fill="none" stroke="#5e540a" stroke-width="1.1"/></svg>
<div class="tr" style="left:84.3px;top:107.3px">切削出来形<span class="c">(68)</span></div>
<svg class="fold" style="left:82.6px;top:121.7px" width="12" height="10.500" viewBox="0 0 12 10" preserveAspectRatio="none"><path d="M0.6 2.4 L1.9 0.7 H5 L6 2 H10.6 V8.8 H0.6 Z" fill="#f7e76e" stroke="#857818" stroke-width="0.9"/><path d="M2 3.4 H9.4 V7.8 H2 Z" fill="#fcdf96" opacity="0.85"/><path d="M11.2 2.6 V9.4 H1" fill="none" stroke="#5e540a" stroke-width="1.1"/></svg>
<div class="tr" style="left:98.2px;top:120.6px">590.1～590.2<span class="c">(5)</span></div>
<svg class="fold" style="left:82.6px;top:134.9px" width="12" height="10.500" viewBox="0 0 12 10" preserveAspectRatio="none"><path d="M0.6 2.4 L1.9 0.7 H5 L6 2 H10.6 V8.8 H0.6 Z" fill="#f7e76e" stroke="#857818" stroke-width="0.9"/><path d="M2 3.4 H9.4 V7.8 H2 Z" fill="#fcdf96" opacity="0.85"/><path d="M11.2 2.6 V9.4 H1" fill="none" stroke="#5e540a" stroke-width="1.1"/></svg>
<div class="tr" style="left:98.2px;top:133.8px">590.3～590.4<span class="c">(18)</span></div>
<svg class="fold" style="left:82.6px;top:148.1px" width="12" height="10.500" viewBox="0 0 12 10" preserveAspectRatio="none"><path d="M0.6 2.4 L1.9 0.7 H5 L6 2 H10.6 V8.8 H0.6 Z" fill="#f7e76e" stroke="#857818" stroke-width="0.9"/><path d="M2 3.4 H9.4 V7.8 H2 Z" fill="#fcdf96" opacity="0.85"/><path d="M11.2 2.6 V9.4 H1" fill="none" stroke="#5e540a" stroke-width="1.1"/></svg>
<div class="tr" style="left:98.2px;top:147.0px">590.4～590.5<span class="c">(18)</span></div>
<svg class="fold" style="left:82.6px;top:161.4px" width="12" height="10.500" viewBox="0 0 12 10" preserveAspectRatio="none"><path d="M0.6 2.4 L1.9 0.7 H5 L6 2 H10.6 V8.8 H0.6 Z" fill="#f7e76e" stroke="#857818" stroke-width="0.9"/><path d="M2 3.4 H9.4 V7.8 H2 Z" fill="#fcdf96" opacity="0.85"/><path d="M11.2 2.6 V9.4 H1" fill="none" stroke="#5e540a" stroke-width="1.1"/></svg>
<div class="tr" style="left:98.2px;top:160.3px">590.5～590.6<span class="c">(18)</span></div>
<svg class="fold" style="left:82.6px;top:174.6px" width="12" height="10.500" viewBox="0 0 12 10" preserveAspectRatio="none"><path d="M0.6 2.4 L1.9 0.7 H5 L6 2 H10.6 V8.8 H0.6 Z" fill="#f7e76e" stroke="#857818" stroke-width="0.9"/><path d="M2 3.4 H9.4 V7.8 H2 Z" fill="#fcdf96" opacity="0.85"/><path d="M11.2 2.6 V9.4 H1" fill="none" stroke="#5e540a" stroke-width="1.1"/></svg>
<div class="tr" style="left:98.2px;top:173.5px">589.98～590.1<span class="c">(9)</span></div>
<svg class="fold" style="left:68.7px;top:187.8px" width="12" height="10.500" viewBox="0 0 12 10" preserveAspectRatio="none"><path d="M0.6 2.4 L1.9 0.7 H5 L6 2 H10.6 V8.8 H0.6 Z" fill="#f7e76e" stroke="#857818" stroke-width="0.9"/><path d="M2 3.4 H9.4 V7.8 H2 Z" fill="#fcdf96" opacity="0.85"/><path d="M11.2 2.6 V9.4 H1" fill="none" stroke="#5e540a" stroke-width="1.1"/></svg>
<div class="tr" style="left:84.3px;top:186.7px">基層出来形<span class="c">(99)</span></div>
<svg class="fold" style="left:68.7px;top:201.1px" width="12" height="10.500" viewBox="0 0 12 10" preserveAspectRatio="none"><path d="M0.6 2.4 L1.9 0.7 H5 L6 2 H10.6 V8.8 H0.6 Z" fill="#f7e76e" stroke="#857818" stroke-width="0.9"/><path d="M2 3.4 H9.4 V7.8 H2 Z" fill="#fcdf96" opacity="0.85"/><path d="M11.2 2.6 V9.4 H1" fill="none" stroke="#5e540a" stroke-width="1.1"/></svg>
<div class="tr" style="left:84.3px;top:200.0px">表層出来形<span class="c">(101)</span></div>
<svg class="fold" style="left:54.8px;top:214.3px" width="12" height="10.500" viewBox="0 0 12 10" preserveAspectRatio="none"><path d="M0.6 2.4 L1.9 0.7 H5 L6 2 H10.6 V8.8 H0.6 Z" fill="#f7e76e" stroke="#857818" stroke-width="0.9"/><path d="M2 3.4 H9.4 V7.8 H2 Z" fill="#fcdf96" opacity="0.85"/><path d="M11.2 2.6 V9.4 H1" fill="none" stroke="#5e540a" stroke-width="1.1"/></svg>
<div class="tr" style="left:70.4px;top:213.2px">北上川PA<span class="c">(63)</span></div>
<svg class="fold" style="left:68.7px;top:227.5px" width="12" height="10.500" viewBox="0 0 12 10" preserveAspectRatio="none"><path d="M0.6 2.4 L1.9 0.7 H5 L6 2 H10.6 V8.8 H0.6 Z" fill="#f7e76e" stroke="#857818" stroke-width="0.9"/><path d="M2 3.4 H9.4 V7.8 H2 Z" fill="#fcdf96" opacity="0.85"/><path d="M11.2 2.6 V9.4 H1" fill="none" stroke="#5e540a" stroke-width="1.1"/></svg>
<div class="tr" style="left:84.3px;top:226.4px">着手前･完成<span class="c">(3)</span></div>
<svg class="fold" style="left:68.7px;top:240.7px" width="12" height="10.500" viewBox="0 0 12 10" preserveAspectRatio="none"><path d="M0.6 2.4 L1.9 0.7 H5 L6 2 H10.6 V8.8 H0.6 Z" fill="#f7e76e" stroke="#857818" stroke-width="0.9"/><path d="M2 3.4 H9.4 V7.8 H2 Z" fill="#fcdf96" opacity="0.85"/><path d="M11.2 2.6 V9.4 H1" fill="none" stroke="#5e540a" stroke-width="1.1"/></svg>
<div class="tr" style="left:84.3px;top:239.6px">施工状況<span class="c">(2)</span></div>
<svg class="fold" style="left:68.7px;top:254.0px" width="12" height="10.500" viewBox="0 0 12 10" preserveAspectRatio="none"><path d="M0.6 2.4 L1.9 0.7 H5 L6 2 H10.6 V8.8 H0.6 Z" fill="#f7e76e" stroke="#857818" stroke-width="0.9"/><path d="M2 3.4 H9.4 V7.8 H2 Z" fill="#fcdf96" opacity="0.85"/><path d="M11.2 2.6 V9.4 H1" fill="none" stroke="#5e540a" stroke-width="1.1"/></svg>
<div class="tr" style="left:84.3px;top:252.9px">温度管理<span class="c">(10)</span></div>
<svg class="fold" style="left:68.7px;top:267.2px" width="12" height="10.500" viewBox="0 0 12 10" preserveAspectRatio="none"><path d="M0.6 2.4 L1.9 0.7 H5 L6 2 H10.6 V8.8 H0.6 Z" fill="#f7e76e" stroke="#857818" stroke-width="0.9"/><path d="M2 3.4 H9.4 V7.8 H2 Z" fill="#fcdf96" opacity="0.85"/><path d="M11.2 2.6 V9.4 H1" fill="none" stroke="#5e540a" stroke-width="1.1"/></svg>
<div class="tr" style="left:84.3px;top:266.1px">切削出来形<span class="c">(16)</span></div>
<svg class="fold" style="left:82.6px;top:280.4px" width="12" height="10.500" viewBox="0 0 12 10" preserveAspectRatio="none"><path d="M0.6 2.4 L1.9 0.7 H5 L6 2 H10.6 V8.8 H0.6 Z" fill="#f7e76e" stroke="#857818" stroke-width="0.9"/><path d="M2 3.4 H9.4 V7.8 H2 Z" fill="#fcdf96" opacity="0.85"/><path d="M11.2 2.6 V9.4 H1" fill="none" stroke="#5e540a" stroke-width="1.1"/></svg>
<div class="tr" style="left:98.2px;top:279.3px">A1側<span class="c">(8)</span></div>
<svg class="fold" style="left:82.6px;top:293.7px" width="12" height="10.500" viewBox="0 0 12 10" preserveAspectRatio="none"><path d="M0.6 2.4 L1.9 0.7 H5 L6 2 H10.6 V8.8 H0.6 Z" fill="#f7e76e" stroke="#857818" stroke-width="0.9"/><path d="M2 3.4 H9.4 V7.8 H2 Z" fill="#fcdf96" opacity="0.85"/><path d="M11.2 2.6 V9.4 H1" fill="none" stroke="#5e540a" stroke-width="1.1"/></svg>
<div class="tr" style="left:98.2px;top:292.6px">A2側<span class="c">(8)</span></div>
<svg class="fold" style="left:68.7px;top:306.9px" width="12" height="10.500" viewBox="0 0 12 10" preserveAspectRatio="none"><path d="M0.6 2.4 L1.9 0.7 H5 L6 2 H10.6 V8.8 H0.6 Z" fill="#f7e76e" stroke="#857818" stroke-width="0.9"/><path d="M2 3.4 H9.4 V7.8 H2 Z" fill="#fcdf96" opacity="0.85"/><path d="M11.2 2.6 V9.4 H1" fill="none" stroke="#5e540a" stroke-width="1.1"/></svg>
<div class="tr" style="left:84.3px;top:305.8px">基層出来形<span class="c">(16)</span></div>
<svg class="fold" style="left:82.6px;top:320.1px" width="12" height="10.500" viewBox="0 0 12 10" preserveAspectRatio="none"><path d="M0.6 2.4 L1.9 0.7 H5 L6 2 H10.6 V8.8 H0.6 Z" fill="#f7e76e" stroke="#857818" stroke-width="0.9"/><path d="M2 3.4 H9.4 V7.8 H2 Z" fill="#fcdf96" opacity="0.85"/><path d="M11.2 2.6 V9.4 H1" fill="none" stroke="#5e540a" stroke-width="1.1"/></svg>
<div class="tr" style="left:98.2px;top:319.0px">A1側<span class="c">(8)</span></div>
<svg class="fold" style="left:82.6px;top:333.4px" width="12" height="10.500" viewBox="0 0 12 10" preserveAspectRatio="none"><path d="M0.6 2.4 L1.9 0.7 H5 L6 2 H10.6 V8.8 H0.6 Z" fill="#f7e76e" stroke="#857818" stroke-width="0.9"/><path d="M2 3.4 H9.4 V7.8 H2 Z" fill="#fcdf96" opacity="0.85"/><path d="M11.2 2.6 V9.4 H1" fill="none" stroke="#5e540a" stroke-width="1.1"/></svg>
<div class="tr" style="left:98.2px;top:332.2px">A2側<span class="c">(8)</span></div>
<svg class="fold" style="left:68.7px;top:346.6px" width="12" height="10.500" viewBox="0 0 12 10" preserveAspectRatio="none"><path d="M0.6 2.4 L1.9 0.7 H5 L6 2 H10.6 V8.8 H0.6 Z" fill="#f7e76e" stroke="#857818" stroke-width="0.9"/><path d="M2 3.4 H9.4 V7.8 H2 Z" fill="#fcdf96" opacity="0.85"/><path d="M11.2 2.6 V9.4 H1" fill="none" stroke="#5e540a" stroke-width="1.1"/></svg>
<div class="tr" style="left:84.3px;top:345.5px">表層出来形<span class="c">(16)</span></div>
<svg class="fold" style="left:82.6px;top:359.8px" width="12" height="10.500" viewBox="0 0 12 10" preserveAspectRatio="none"><path d="M0.6 2.4 L1.9 0.7 H5 L6 2 H10.6 V8.8 H0.6 Z" fill="#f7e76e" stroke="#857818" stroke-width="0.9"/><path d="M2 3.4 H9.4 V7.8 H2 Z" fill="#fcdf96" opacity="0.85"/><path d="M11.2 2.6 V9.4 H1" fill="none" stroke="#5e540a" stroke-width="1.1"/></svg>
<div class="tr" style="left:98.2px;top:358.7px">A1側<span class="c">(8)</span></div>
<svg class="fold" style="left:82.6px;top:373.0px" width="12" height="10.500" viewBox="0 0 12 10" preserveAspectRatio="none"><path d="M0.6 2.4 L1.9 0.7 H5 L6 2 H10.6 V8.8 H0.6 Z" fill="#f7e76e" stroke="#857818" stroke-width="0.9"/><path d="M2 3.4 H9.4 V7.8 H2 Z" fill="#fcdf96" opacity="0.85"/><path d="M11.2 2.6 V9.4 H1" fill="none" stroke="#5e540a" stroke-width="1.1"/></svg>
<div class="tr" style="left:98.2px;top:371.9px">A2側<span class="c">(8)</span></div>
<svg class="fold" style="left:54.8px;top:386.3px" width="12" height="10.500" viewBox="0 0 12 10" preserveAspectRatio="none"><path d="M0.6 2.4 L1.9 0.7 H5 L6 2 H10.6 V8.8 H0.6 Z" fill="#f7e76e" stroke="#857818" stroke-width="0.9"/><path d="M2 3.4 H9.4 V7.8 H2 Z" fill="#fcdf96" opacity="0.85"/><path d="M11.2 2.6 V9.4 H1" fill="none" stroke="#5e540a" stroke-width="1.1"/></svg>
<div class="tr" style="left:70.4px;top:385.2px">最上川PA<span class="c">(157)</span></div>
<svg class="fold" style="left:68.7px;top:399.5px" width="12" height="10.500" viewBox="0 0 12 10" preserveAspectRatio="none"><path d="M0.6 2.4 L1.9 0.7 H5 L6 2 H10.6 V8.8 H0.6 Z" fill="#f7e76e" stroke="#857818" stroke-width="0.9"/><path d="M2 3.4 H9.4 V7.8 H2 Z" fill="#fcdf96" opacity="0.85"/><path d="M11.2 2.6 V9.4 H1" fill="none" stroke="#5e540a" stroke-width="1.1"/></svg>
<div class="tr" style="left:84.3px;top:398.4px">着手前･完成<span class="c">(4)</span></div>
<svg class="fold" style="left:68.7px;top:412.7px" width="12" height="10.500" viewBox="0 0 12 10" preserveAspectRatio="none"><path d="M0.6 2.4 L1.9 0.7 H5 L6 2 H10.6 V8.8 H0.6 Z" fill="#f7e76e" stroke="#857818" stroke-width="0.9"/><path d="M2 3.4 H9.4 V7.8 H2 Z" fill="#fcdf96" opacity="0.85"/><path d="M11.2 2.6 V9.4 H1" fill="none" stroke="#5e540a" stroke-width="1.1"/></svg>
<div class="tr" style="left:84.3px;top:411.6px">施工状況<span class="c">(30)</span></div>
<svg class="fold" style="left:68.7px;top:426.0px" width="12" height="10.500" viewBox="0 0 12 10" preserveAspectRatio="none"><path d="M0.6 2.4 L1.9 0.7 H5 L6 2 H10.6 V8.8 H0.6 Z" fill="#f7e76e" stroke="#857818" stroke-width="0.9"/><path d="M2 3.4 H9.4 V7.8 H2 Z" fill="#fcdf96" opacity="0.85"/><path d="M11.2 2.6 V9.4 H1" fill="none" stroke="#5e540a" stroke-width="1.1"/></svg>
<div class="tr" style="left:84.3px;top:424.9px">温度管理<span class="c">(10)</span></div>
<svg class="fold" style="left:68.7px;top:439.2px" width="12" height="10.500" viewBox="0 0 12 10" preserveAspectRatio="none"><path d="M0.6 2.4 L1.9 0.7 H5 L6 2 H10.6 V8.8 H0.6 Z" fill="#f7e76e" stroke="#857818" stroke-width="0.9"/><path d="M2 3.4 H9.4 V7.8 H2 Z" fill="#fcdf96" opacity="0.85"/><path d="M11.2 2.6 V9.4 H1" fill="none" stroke="#5e540a" stroke-width="1.1"/></svg>
<div class="tr" style="left:84.3px;top:438.1px">切削出来形<span class="c">(41)</span></div>
<svg class="fold" style="left:68.7px;top:452.4px" width="12" height="10.500" viewBox="0 0 12 10" preserveAspectRatio="none"><path d="M0.6 2.4 L1.9 0.7 H5 L6 2 H10.6 V8.8 H0.6 Z" fill="#f7e76e" stroke="#857818" stroke-width="0.9"/><path d="M2 3.4 H9.4 V7.8 H2 Z" fill="#fcdf96" opacity="0.85"/><path d="M11.2 2.6 V9.4 H1" fill="none" stroke="#5e540a" stroke-width="1.1"/></svg>
<div class="tr" style="left:84.3px;top:451.3px">基層出来形<span class="c">(36)</span></div>
<svg class="fold" style="left:68.7px;top:465.7px" width="12" height="10.500" viewBox="0 0 12 10" preserveAspectRatio="none"><path d="M0.6 2.4 L1.9 0.7 H5 L6 2 H10.6 V8.8 H0.6 Z" fill="#f7e76e" stroke="#857818" stroke-width="0.9"/><path d="M2 3.4 H9.4 V7.8 H2 Z" fill="#fcdf96" opacity="0.85"/><path d="M11.2 2.6 V9.4 H1" fill="none" stroke="#5e540a" stroke-width="1.1"/></svg>
<div class="tr" style="left:84.3px;top:464.6px">表層出来形<span class="c">(36)</span></div>
<svg class="fold" style="left:54.8px;top:478.9px" width="12" height="10.500" viewBox="0 0 12 10" preserveAspectRatio="none"><path d="M0.6 2.4 L1.9 0.7 H5 L6 2 H10.6 V8.8 H0.6 Z" fill="#f7e76e" stroke="#857818" stroke-width="0.9"/><path d="M2 3.4 H9.4 V7.8 H2 Z" fill="#fcdf96" opacity="0.85"/><path d="M11.2 2.6 V9.4 H1" fill="none" stroke="#5e540a" stroke-width="1.1"/></svg>
<div class="tr" style="left:70.4px;top:477.8px">下<span style="margin-right:-3.500px">）</span><span style="letter-spacing:-0.550px">K579.324～579.524</span><span class="c">(</span></div>
<svg class="fold" style="left:68.7px;top:492.1px" width="12" height="10.500" viewBox="0 0 12 10" preserveAspectRatio="none"><path d="M0.6 2.4 L1.9 0.7 H5 L6 2 H10.6 V8.8 H0.6 Z" fill="#f7e76e" stroke="#857818" stroke-width="0.9"/><path d="M2 3.4 H9.4 V7.8 H2 Z" fill="#fcdf96" opacity="0.85"/><path d="M11.2 2.6 V9.4 H1" fill="none" stroke="#5e540a" stroke-width="1.1"/></svg>
<div class="tr" style="left:84.3px;top:491.0px">着手前･完成<span class="c">(8)</span></div>
<svg class="fold" style="left:68.7px;top:505.3px" width="12" height="10.500" viewBox="0 0 12 10" preserveAspectRatio="none"><path d="M0.6 2.4 L1.9 0.7 H5 L6 2 H10.6 V8.8 H0.6 Z" fill="#f7e76e" stroke="#857818" stroke-width="0.9"/><path d="M2 3.4 H9.4 V7.8 H2 Z" fill="#fcdf96" opacity="0.85"/><path d="M11.2 2.6 V9.4 H1" fill="none" stroke="#5e540a" stroke-width="1.1"/></svg>
<div class="tr" style="left:84.3px;top:504.2px">施工状況<span class="c">(16)</span></div>
<svg class="fold" style="left:68.7px;top:518.6px" width="12" height="10.500" viewBox="0 0 12 10" preserveAspectRatio="none"><path d="M0.6 2.4 L1.9 0.7 H5 L6 2 H10.6 V8.8 H0.6 Z" fill="#f7e76e" stroke="#857818" stroke-width="0.9"/><path d="M2 3.4 H9.4 V7.8 H2 Z" fill="#fcdf96" opacity="0.85"/><path d="M11.2 2.6 V9.4 H1" fill="none" stroke="#5e540a" stroke-width="1.1"/></svg>
<div class="tr" style="left:84.3px;top:517.5px">温度管理<span class="c">(8)</span></div>
<svg class="fold" style="left:68.7px;top:531.8px" width="12" height="10.500" viewBox="0 0 12 10" preserveAspectRatio="none"><path d="M0.6 2.4 L1.9 0.7 H5 L6 2 H10.6 V8.8 H0.6 Z" fill="#f7e76e" stroke="#857818" stroke-width="0.9"/><path d="M2 3.4 H9.4 V7.8 H2 Z" fill="#fcdf96" opacity="0.85"/><path d="M11.2 2.6 V9.4 H1" fill="none" stroke="#5e540a" stroke-width="1.1"/></svg>
<div class="tr" style="left:84.3px;top:530.7px">切削出来形<span class="c">(12)</span></div>
<svg class="fold" style="left:68.7px;top:545.0px" width="12" height="10.500" viewBox="0 0 12 10" preserveAspectRatio="none"><path d="M0.6 2.4 L1.9 0.7 H5 L6 2 H10.6 V8.8 H0.6 Z" fill="#f7e76e" stroke="#857818" stroke-width="0.9"/><path d="M2 3.4 H9.4 V7.8 H2 Z" fill="#fcdf96" opacity="0.85"/><path d="M11.2 2.6 V9.4 H1" fill="none" stroke="#5e540a" stroke-width="1.1"/></svg>
<div class="tr" style="left:84.3px;top:543.9px">基層出来形<span class="c">(12)</span></div>
<svg class="fold" style="left:68.7px;top:558.3px" width="12" height="10.500" viewBox="0 0 12 10" preserveAspectRatio="none"><path d="M0.6 2.4 L1.9 0.7 H5 L6 2 H10.6 V8.8 H0.6 Z" fill="#f7e76e" stroke="#857818" stroke-width="0.9"/><path d="M2 3.4 H9.4 V7.8 H2 Z" fill="#fcdf96" opacity="0.85"/><path d="M11.2 2.6 V9.4 H1" fill="none" stroke="#5e540a" stroke-width="1.1"/></svg>
<div class="tr" style="left:84.3px;top:557.2px">表層出来形<span class="c">(12)</span></div>
<svg class="fold" style="left:54.8px;top:571.5px" width="12" height="10.500" viewBox="0 0 12 10" preserveAspectRatio="none"><path d="M0.6 2.4 L1.9 0.7 H5 L6 2 H10.6 V8.8 H0.6 Z" fill="#f7e76e" stroke="#857818" stroke-width="0.9"/><path d="M2 3.4 H9.4 V7.8 H2 Z" fill="#fcdf96" opacity="0.85"/><path d="M11.2 2.6 V9.4 H1" fill="none" stroke="#5e540a" stroke-width="1.1"/></svg>
<div class="tr" style="left:70.4px;top:570.4px">規制<span class="c">(99)</span></div>
<svg class="fold" style="left:68.7px;top:584.7px" width="12" height="10.500" viewBox="0 0 12 10" preserveAspectRatio="none"><path d="M0.6 2.4 L1.9 0.7 H5 L6 2 H10.6 V8.8 H0.6 Z" fill="#f7e76e" stroke="#857818" stroke-width="0.9"/><path d="M2 3.4 H9.4 V7.8 H2 Z" fill="#fcdf96" opacity="0.85"/><path d="M11.2 2.6 V9.4 H1" fill="none" stroke="#5e540a" stroke-width="1.1"/></svg>
<div class="tr" style="left:84.3px;top:583.6px">新<span style="letter-spacing:-1.500px">しいフォルダ</span><span class="c">(96)</span></div>
</div></div>
<div class="abs" style="left:192px;top:93px;width:2px;height:618px;background:#f6f6f6"></div>
<div class="abs" style="left:4px;top:709px;width:188px;height:1px;background:#f0f0f0"></div>
<div class="abs" style="left:201px;top:94px;width:739px;height:582px;background:#fff"></div>
<div class="abs" style="left:199px;top:93px;width:741px;height:1px;background:#fafafa"></div>
<div class="abs" style="left:201px;top:94px;width:739px;height:1px;background:#9a9a9a"></div>
<div class="abs" style="left:201px;top:95px;width:739px;height:1px;background:#787878"></div>
<div class="abs" style="left:201px;top:94px;width:1px;height:582px;background:#8a8a8a"></div>
<div class="abs" style="left:202px;top:95px;width:1px;height:581px;background:#7a7a7a"></div>
<div class="hd" style="left:203.0px;width:23.0px"></div>
<div class="hd" style="left:226.0px;width:120.0px"></div>
<div class="hd" style="left:346.0px;width:12.0px"></div>
<div class="hd" style="left:358.0px;width:67.0px"></div>
<div class="hd" style="left:425.0px;width:28.5px"></div>
<div class="hd" style="left:453.5px;width:28.0px"></div>
<div class="hd" style="left:481.5px;width:49.0px"></div>
<div class="hd" style="left:530.5px;width:117.0px"></div>
<div class="hd" style="left:647.5px;width:50.5px"></div>
<div class="hd" style="left:698.0px;width:85.0px"></div>
<div class="hd" style="left:783.0px;width:25.5px"></div>
<div class="hd" style="left:808.5px;width:32.5px"></div>
<div class="hd" style="left:841.0px;width:97.0px"></div>
<svg class="abs" style="left:358.0px;top:92.1px;overflow:visible" width="586.0" height="18.6"><text y="13.6" font-family="'Liberation Sans','IPAGothic',sans-serif" font-size="10.60" fill="#000"><tspan x="5.6" textLength="21.4" lengthAdjust="spacingAndGlyphs">写真</tspan><tspan x="27.5" textLength="34.7" lengthAdjust="spacingAndGlyphs">タイトル</tspan><tspan x="69.9" textLength="22.1" lengthAdjust="spacingAndGlyphs">印刷</tspan><tspan x="98.7" textLength="20.6" lengthAdjust="spacingAndGlyphs">納品</tspan><tspan x="126.0" textLength="41.8" lengthAdjust="spacingAndGlyphs">ﾀﾞｲｼﾞｪｽﾄ</tspan><tspan x="179.7" textLength="20.8" lengthAdjust="spacingAndGlyphs">写真</tspan><tspan x="200.5" textLength="36.5" lengthAdjust="spacingAndGlyphs">ファイル</tspan><tspan x="238.4" textLength="43.9" lengthAdjust="spacingAndGlyphs">日本語名</tspan><tspan x="360.2" textLength="43.3" lengthAdjust="spacingAndGlyphs">写真区分</tspan><tspan x="427.3" textLength="20.9" lengthAdjust="spacingAndGlyphs">工種</tspan><tspan x="455.4" textLength="22.1" lengthAdjust="spacingAndGlyphs">種別</tspan><tspan x="526.8" textLength="22.2" lengthAdjust="spacingAndGlyphs">細別</tspan></text></svg>
<div class="abs" style="left:648.5px;top:95.500px;width:48.5px;height:12.500px;overflow:hidden"><div style="position:absolute;left:-5.500px;top:0.300px;width:60px;font-size:10.600px;line-height:12px;white-space:nowrap;letter-spacing:-0.200px">写真<span style="margin:0 -2.500px 0 -2.500px">：</span>大分類</div></div>
<div class="abs" style="left:203px;top:108.7px;width:23px;height:98.6px;background:#d4d0c8;border-right:1px solid #8e8e8e;border-bottom:1px solid #a09c96;box-shadow:inset 1px 1px 0 #f0eee8;box-sizing:border-box"></div>
<div class="cell" style="left:202.300px;width:22px;text-align:center;top:152.2px;font-size:11px">1</div>
<div class="abs" style="left:345.5px;top:108.7px;width:1px;height:98.6px;background:#c0c0c0"></div>
<div class="abs" style="left:357.5px;top:108.7px;width:1px;height:98.6px;background:#c0c0c0"></div>
<div class="abs" style="left:424.5px;top:108.7px;width:1px;height:98.6px;background:#c0c0c0"></div>
<div class="abs" style="left:453.0px;top:108.7px;width:1px;height:98.6px;background:#c0c0c0"></div>
<div class="abs" style="left:481.0px;top:108.7px;width:1px;height:98.6px;background:#c0c0c0"></div>
<div class="abs" style="left:530.0px;top:108.7px;width:1px;height:98.6px;background:#c0c0c0"></div>
<div class="abs" style="left:647.0px;top:108.7px;width:1px;height:98.6px;background:#c0c0c0"></div>
<div class="abs" style="left:808.0px;top:108.7px;width:1px;height:98.6px;background:#c0c0c0"></div>
<div class="abs" style="left:840.5px;top:108.7px;width:1px;height:98.6px;background:#c0c0c0"></div>
<div class="abs" style="left:226px;top:206.8px;width:714px;height:1px;background:#c0c0c0"></div>
<div class="abs" style="left:358.5px;top:108.7px;width:66.5px;height:99.1px;background:#ffff80"></div>
<div class="abs" style="left:648.0px;top:108.7px;width:37.0px;height:99.1px;background:#ffff80"></div>
<div class="abs" style="left:698.0px;top:108.7px;width:72.5px;height:99.1px;background:#ffff80"></div>
<div class="abs" style="left:685.0px;top:109.2px;width:13.0px;height:98.6px;background:#f0f0f0;border-right:1.5px solid #202020;border-bottom:1.5px solid #202020;box-sizing:border-box"></div>
<svg class="abs" style="left:686.8px;top:156.0px" width="8" height="5" viewBox="0 0 8 5"><path d="M1.300 0.700h5.400l-2.700 3.300z" fill="#000"/></svg>
<div class="abs" style="left:770.5px;top:109.2px;width:13.0px;height:98.6px;background:#f0f0f0;border-right:1.5px solid #202020;border-bottom:1.5px solid #202020;box-sizing:border-box"></div>
<svg class="abs" style="left:772.3px;top:156.0px" width="8" height="5" viewBox="0 0 8 5"><path d="M1.300 0.700h5.400l-2.700 3.300z" fill="#000"/></svg>
<svg class="abs" style="left:227.0px;top:121.9px" width="118" height="73" viewBox="0 0 118 73"><g filter="url(#b1)"><rect x="-5" y="-5" width="128" height="83" fill="#7d5c2e"/><polygon points="-5,-5 123,-5 123,12 70,5.600 42,5.600 0,30.800 -5,32" fill="#b3a48e"/><polygon points="2,8 20,6 24,16 6,22" fill="#cfc3ae"/><polygon points="0,30.800 42,5.600 43,22.600 41,78 -5,78 -5,32" fill="#5b3f1e"/><polygon points="16,21 41,7.500 42,22.600 14,23.500" fill="#76552c"/><polygon points="10,32 32,30 30,50 12,52" fill="#694a25"/><polygon points="-5,55 30,55 34,78 -5,78" fill="#4c3518"/><polygon points="42,5.600 62,5.600 62,23 43,22.600" fill="#573a1b"/><polygon points="62,5.600 82,8 80,24 62,23" fill="#9a6a30"/><polygon points="63,5.600 85,8 123,22 123,78 95,78 80,50 66,30" fill="#bf8f4e"/><polygon points="70,25 92,24 100,44 80,46" fill="#d0a766"/><polygon points="96,24 123,26 123,50 104,48" fill="#c99b58"/><polygon points="41,40 66,38 80,50 96,78 37,78" fill="#8b6d40"/><polygon points="46,44 62,44 68,78 44,78" fill="#98794a"/><polygon points="84,45 96,46 98,60 88,58" fill="#4b3820"/><polygon points="90,62 123,58 123,78 92,78" fill="#6b5030"/><polygon points="66,-5 123,-5 123,12 96,9 70,5" fill="#b6aa96"/><polygon points="76,-5 123,-5 123,2.500 76,3" fill="#2a2622"/><polygon points="88,2 113,3 114,11 92,10" fill="#c2baaa"/><polygon points="88,2 113,3 113,4 88,3.200" fill="#3a342c"/><polygon points="106,6 123,4 123,16 110,16" fill="#2e2a24"/><polygon points="22,-5 32,-5 32,4 22,4" fill="#38322a"/><polygon points="7,3 14,3 15,8 8,8" fill="#6a6258"/></g><rect width="118" height="73" filter="url(#nz)"/><rect width="118" height="73" filter="url(#nz2)" opacity="0.22"/><g filter="url(#b2)"><rect x="0" y="22.800" width="118" height="1.300" fill="#d6c6a4" opacity="0.900"/><rect x="60.600" y="0" width="1.500" height="50" fill="#a39274"/><rect x="45" y="15.500" width="16" height="13.500" rx="3" fill="#cfcfcf"/><rect x="48.600" y="13" width="8" height="4.500" fill="#2c2c2c"/><circle cx="53.100" cy="11.600" r="4.100" fill="#f4f4f4"/><rect x="48.600" y="40" width="7.600" height="8.500" fill="#26262c"/><rect x="40" y="26.400" width="16.200" height="14.500" fill="#35383a"/><rect x="41" y="27.300" width="14" height="2" fill="#55586a"/><rect x="48.600" y="48.500" width="3" height="1.800" fill="#e8e8e8"/><rect x="53" y="47.800" width="3" height="1.800" fill="#e8e8e8"/><rect x="24" y="0" width="7" height="4" fill="#3a3228"/></g></svg>
<div class="cell" style="left:361px;top:152.5px">埋戻工&nbsp; G</div>
<div class="cell" style="left:650px;top:152.5px">工事</div>
<div class="cell" style="left:699px;top:152.5px;letter-spacing:-0.6px">その 他写真</div>
<div class="cell" style="left:785px;top:152.5px">雑工</div>
<div class="cell" style="left:811px;top:152.5px;letter-spacing:-0.3px">小ｰ29</div>
<div class="cell" style="left:843px;top:152.5px;width:95px;overflow:hidden;letter-spacing:-0.150px">下<span style="margin-right:-3.500px">）</span>KP290.1～KP290.6</div>
<div class="cell" style="left:533px;top:147.2px">出来形検測<span style="letter-spacing:1px;margin-left:0.500px">(L)</span></div>
<div class="cb" style="left:434.5px;top:153.6px"></div>
<svg class="abs" style="left:434.5px;top:153.6px" width="10" height="10" viewBox="0 0 10 10"><path d="M2.500 4.600L4.500 6.700L7.900 2.700" stroke="#000" stroke-width="1.800" fill="none"/></svg>
<div class="cb" style="left:462.6px;top:153.6px"></div>
<svg class="abs" style="left:462.6px;top:153.6px" width="10" height="10" viewBox="0 0 10 10"><path d="M2.500 4.600L4.500 6.700L7.900 2.700" stroke="#000" stroke-width="1.800" fill="none"/></svg>
<div class="cb" style="left:500.7px;top:153.6px"></div>
<div class="abs" style="left:203px;top:207.3px;width:23px;height:98.6px;background:#d4d0c8;border-right:1px solid #8e8e8e;border-bottom:1px solid #a09c96;box-shadow:inset 1px 1px 0 #f0eee8;box-sizing:border-box"></div>
<div class="cell" style="left:202.300px;width:22px;text-align:center;top:250.8px;font-size:11px">2</div>
<div class="abs" style="left:345.5px;top:207.3px;width:1px;height:98.6px;background:#c0c0c0"></div>
<div class="abs" style="left:357.5px;top:207.3px;width:1px;height:98.6px;background:#c0c0c0"></div>
<div class="abs" style="left:424.5px;top:207.3px;width:1px;height:98.6px;background:#c0c0c0"></div>
<div class="abs" style="left:453.0px;top:207.3px;width:1px;height:98.6px;background:#c0c0c0"></div>
<div class="abs" style="left:481.0px;top:207.3px;width:1px;height:98.6px;background:#c0c0c0"></div>
<div class="abs" style="left:530.0px;top:207.3px;width:1px;height:98.6px;background:#c0c0c0"></div>
<div class="abs" style="left:647.0px;top:207.3px;width:1px;height:98.6px;background:#c0c0c0"></div>
<div class="abs" style="left:808.0px;top:207.3px;width:1px;height:98.6px;background:#c0c0c0"></div>
<div class="abs" style="left:840.5px;top:207.3px;width:1px;height:98.6px;background:#c0c0c0"></div>
<div class="abs" style="left:226px;top:305.4px;width:714px;height:1px;background:#c0c0c0"></div>
<div class="abs" style="left:358.5px;top:207.3px;width:66.5px;height:99.1px;background:#ffff80"></div>
<div class="abs" style="left:648.0px;top:207.3px;width:37.0px;height:99.1px;background:#ffff80"></div>
<div class="abs" style="left:698.0px;top:207.3px;width:72.5px;height:99.1px;background:#ffff80"></div>
<div class="abs" style="left:685.0px;top:207.8px;width:13.0px;height:98.6px;background:#f0f0f0;border-right:1.5px solid #202020;border-bottom:1.5px solid #202020;box-sizing:border-box"></div>
<svg class="abs" style="left:686.8px;top:254.6px" width="8" height="5" viewBox="0 0 8 5"><path d="M1.300 0.700h5.400l-2.700 3.300z" fill="#000"/></svg>
<div class="abs" style="left:770.5px;top:207.8px;width:13.0px;height:98.6px;background:#f0f0f0;border-right:1.5px solid #202020;border-bottom:1.5px solid #202020;box-sizing:border-box"></div>
<svg class="abs" style="left:772.3px;top:254.6px" width="8" height="5" viewBox="0 0 8 5"><path d="M1.300 0.700h5.400l-2.700 3.300z" fill="#000"/></svg>
<svg class="abs" style="left:227.0px;top:220.5px" width="118" height="73" viewBox="0 0 118 73"><g filter="url(#b1)"><rect x="-5" y="-5" width="128" height="83" fill="#b48c50"/><polygon points="-5,-5 37.700,-5 37.700,0 30,21.600 13.800,78 -5,78" fill="#bdad95"/><polygon points="2,4 16,2 18,14 4,18" fill="#d2c6b2"/><polygon points="-5,44 16,44 12,78 -5,78" fill="#b6a68c"/><polygon points="36,-5 123,-5 123,8 70,5.900 37.700,5.900" fill="#c0b49c"/><polygon points="37.700,5.900 50,5.900 50,78 12,78 30,21.600" fill="#94703c"/><polygon points="28,36 48,36 50,78 14,78" fill="#765830"/><polygon points="27,58 35,58 34,72 26,72" fill="#4c3e2a"/><polygon points="37.700,5.900 70,5.900 68,25 50,26 48,12" fill="#9a7038"/><polygon points="58,7 68,7 67,19 59,19" fill="#7a5428"/><polygon points="50,29 66,27 72,78 50,78" fill="#a89068"/><polygon points="65,26.600 80,30.400 93,78 70,78" fill="#d0b078"/><polygon points="70,6 88,16 123,35 123,78 93,78 80,30 70,25" fill="#c09854"/><polygon points="100,50 123,48 123,78 96,78" fill="#c8a262"/><polygon points="77.800,30.400 87.900,35.400 90.400,49.200 82.900,48" fill="#6a5438"/><polygon points="70,5 123,5 123,34 100,22 88,15" fill="#c4b8a4"/><polygon points="70,-1 88,-1 88,5 70,5" fill="#2c2820"/><polygon points="78,-2 82,-2 82,1 78,1" fill="#e0c040"/><polygon points="92,1 123,1 123,6.500 92,6" fill="#2a9aa0"/><polygon points="83,4.500 108,8 108,18 96,17 84,9" fill="#9a8c78"/><polygon points="83,4.500 108,8 108,10 84,6.500" fill="#3a342a"/><polygon points="109,7 123,7 123,18 109,18" fill="#cacaca"/><polygon points="103,17 123,17 123,20 103,19.500" fill="#2e2a24"/></g><rect width="118" height="73" filter="url(#nz)"/><rect width="118" height="73" filter="url(#nz2)" opacity="0.22"/><g filter="url(#b2)"><rect x="7.500" y="22.600" width="18.900" height="20.600" fill="#2f8480"/><rect x="7.500" y="22.600" width="18.900" height="3.200" fill="#6ab2cc"/><rect x="7.500" y="22.600" width="18.900" height="20.600" fill="none" stroke="#7ab8b8" stroke-width="0.500"/><rect x="9.200" y="33.400" width="12.500" height="1.600" fill="#d8e6e4"/><rect x="9.200" y="37.900" width="15" height="1.600" fill="#d8e6e4"/><rect x="7.500" y="9" width="3.500" height="12" fill="#d8d4cc" opacity="0.900"/><rect x="22.500" y="6" width="3.500" height="9" fill="#c8c8cc" opacity="0.900"/><path d="M51 4.500 q3-3 6 0 l0.500 8 h-6.500 z" fill="#eceef2"/><rect x="52.200" y="11.500" width="3.800" height="6.500" fill="#48586e"/><rect x="52.100" y="17.800" width="8.800" height="13.200" fill="#9c988c"/><rect x="52.600" y="18.300" width="7.800" height="3.600" fill="#3a3a38"/><rect x="53.500" y="27" width="6.500" height="3.400" fill="#c4c0b4"/></g></svg>
<div class="cell" style="left:361px;top:251.1px">埋戻工&nbsp; G</div>
<div class="cell" style="left:650px;top:251.1px">工事</div>
<div class="cell" style="left:699px;top:251.1px;letter-spacing:-0.6px">その 他写真</div>
<div class="cell" style="left:785px;top:251.1px">雑工</div>
<div class="cell" style="left:811px;top:251.1px;letter-spacing:-0.3px">小ｰ29</div>
<div class="cell" style="left:843px;top:251.1px;width:95px;overflow:hidden;letter-spacing:-0.150px">下<span style="margin-right:-3.500px">）</span>KP290.1～KP290.6</div>
<div class="cell" style="left:533px;top:245.8px">出来形検測<span style="letter-spacing:1px;margin-left:0.500px">(L)</span></div>
<div class="cb" style="left:434.5px;top:252.2px"></div>
<svg class="abs" style="left:434.5px;top:252.2px" width="10" height="10" viewBox="0 0 10 10"><path d="M2.500 4.600L4.500 6.700L7.900 2.700" stroke="#000" stroke-width="1.800" fill="none"/></svg>
<div class="cb" style="left:462.6px;top:252.2px"></div>
<svg class="abs" style="left:462.6px;top:252.2px" width="10" height="10" viewBox="0 0 10 10"><path d="M2.500 4.600L4.500 6.700L7.900 2.700" stroke="#000" stroke-width="1.800" fill="none"/></svg>
<div class="cb" style="left:500.7px;top:252.2px"></div>
<div class="abs" style="left:203px;top:305.9px;width:23px;height:98.6px;background:#d4d0c8;border-right:1px solid #8e8e8e;border-bottom:1px solid #a09c96;box-shadow:inset 1px 1px 0 #f0eee8;box-sizing:border-box"></div>
<div class="cell" style="left:202.300px;width:22px;text-align:center;top:349.4px;font-size:11px">3</div>
<div class="abs" style="left:345.5px;top:305.9px;width:1px;height:98.6px;background:#c0c0c0"></div>
<div class="abs" style="left:357.5px;top:305.9px;width:1px;height:98.6px;background:#c0c0c0"></div>
<div class="abs" style="left:424.5px;top:305.9px;width:1px;height:98.6px;background:#c0c0c0"></div>
<div class="abs" style="left:453.0px;top:305.9px;width:1px;height:98.6px;background:#c0c0c0"></div>
<div class="abs" style="left:481.0px;top:305.9px;width:1px;height:98.6px;background:#c0c0c0"></div>
<div class="abs" style="left:530.0px;top:305.9px;width:1px;height:98.6px;background:#c0c0c0"></div>
<div class="abs" style="left:647.0px;top:305.9px;width:1px;height:98.6px;background:#c0c0c0"></div>
<div class="abs" style="left:808.0px;top:305.9px;width:1px;height:98.6px;background:#c0c0c0"></div>
<div class="abs" style="left:840.5px;top:305.9px;width:1px;height:98.6px;background:#c0c0c0"></div>
<div class="abs" style="left:226px;top:404.0px;width:714px;height:1px;background:#c0c0c0"></div>
<div class="abs" style="left:358.5px;top:305.9px;width:66.5px;height:99.1px;background:#ffff80"></div>
<div class="abs" style="left:648.0px;top:305.9px;width:37.0px;height:99.1px;background:#ffff80"></div>
<div class="abs" style="left:698.0px;top:305.9px;width:72.5px;height:99.1px;background:#ffff80"></div>
<div class="abs" style="left:685.0px;top:306.4px;width:13.0px;height:98.6px;background:#f0f0f0;border-right:1.5px solid #202020;border-bottom:1.5px solid #202020;box-sizing:border-box"></div>
<svg class="abs" style="left:686.8px;top:353.2px" width="8" height="5" viewBox="0 0 8 5"><path d="M1.300 0.700h5.400l-2.700 3.300z" fill="#000"/></svg>
<div class="abs" style="left:770.5px;top:306.4px;width:13.0px;height:98.6px;background:#f0f0f0;border-right:1.5px solid #202020;border-bottom:1.5px solid #202020;box-sizing:border-box"></div>
<svg class="abs" style="left:772.3px;top:353.2px" width="8" height="5" viewBox="0 0 8 5"><path d="M1.300 0.700h5.400l-2.700 3.300z" fill="#000"/></svg>
<svg class="abs" style="left:227.0px;top:319.1px" width="118" height="73" viewBox="0 0 118 73"><g filter="url(#b1)"><rect x="-5" y="-5" width="128" height="83" fill="#7e5e30"/><polygon points="-5,-5 123,-5 123,10 76,5.300 37.700,5.300 0,40.400 -5,42" fill="#b6a892"/><polygon points="37.700,5.300 74,5.300 74,24.700 22.600,24.700" fill="#7a5628"/><polygon points="62,5.300 74,5.300 74,24 62,24" fill="#5a3c1c"/><polygon points="0,40.400 22.600,24.700 48,24.700 40,78 -5,78 -5,42" fill="#7c5c30"/><polygon points="-5,56 24,54 30,78 -5,78" fill="#624828"/><polygon points="-5,58 8,58 8,70 -5,70" fill="#5a5248"/><polygon points="41.400,46.700 70.300,44.200 87.900,78 37.700,78" fill="#b09060"/><polygon points="48,26 62,26 64,45 44,46" fill="#8a6a3a"/><polygon points="81.600,9 100.400,21.600 123,29 123,78 95.400,78 77.800,43 80.300,24 76,6" fill="#c08c48"/><polygon points="82,26 113,27 113,41 82,41" fill="#cc9c58"/><polygon points="77.800,41.700 123,42 123,58 92,60 82,52" fill="#5e4a32"/><polygon points="88,47 99,47 99,59 88,59" fill="#3e3428"/><polygon points="93,59 123,58 123,78 96,78" fill="#b08c54"/><polygon points="76,-5 123,-5 123,26 100,20 82,9" fill="#b4a892"/><polygon points="76.600,-1 95.400,-1 95.400,5.300 76.600,5.300" fill="#38342c"/><polygon points="93.500,2.800 113,2.800 113,14 98,12" fill="#b8b0a0"/><polygon points="113,0 123,0 123,16 113,16" fill="#2a2620"/><polygon points="20,-1 34,-1 34,12.800 22,12.800" fill="#7a7670"/><polygon points="23,0 32,0 32,7 23,7" fill="#3a3836"/></g><rect width="118" height="73" filter="url(#nz)"/><rect width="118" height="73" filter="url(#nz2)" opacity="0.22"/><g filter="url(#b2)"><rect x="0" y="24.100" width="114" height="1.300" fill="#d2c2a0"/><rect x="60.800" y="0" width="1.500" height="45.400" fill="#bca67e"/><path d="M62.800 22.200 L70.300 12.800 L81.600 12.200 L81.600 26 L70.300 26 L68.400 19 Z" fill="#e4e4ec"/><rect x="74.700" y="11.500" width="4.400" height="3.200" fill="#30282a"/><circle cx="77.700" cy="8.600" r="3.700" fill="#f4f4f6"/><path d="M69.700 25.400 L79 25.400 L78.200 41 L70.300 41 Z" fill="#2c2c34"/><rect x="70.300" y="41" width="5" height="2.800" fill="#ecece8"/><rect x="43.600" y="33.100" width="12" height="14.200" fill="#2e8a78"/><rect x="48" y="33.400" width="7.400" height="2.300" fill="#8ab8d0"/><rect x="45.200" y="38.400" width="7.500" height="1.400" fill="#c8dcd8"/><rect x="43.600" y="33.100" width="12" height="14.200" fill="none" stroke="#8ac0b8" stroke-width="0.400"/></g></svg>
<div class="cell" style="left:361px;top:349.7px">埋戻工&nbsp; G</div>
<div class="cell" style="left:650px;top:349.7px">工事</div>
<div class="cell" style="left:699px;top:349.7px;letter-spacing:-0.6px">その 他写真</div>
<div class="cell" style="left:785px;top:349.7px">雑工</div>
<div class="cell" style="left:811px;top:349.7px;letter-spacing:-0.3px">小ｰ29</div>
<div class="cell" style="left:843px;top:349.7px;width:95px;overflow:hidden;letter-spacing:-0.150px">下<span style="margin-right:-3.500px">）</span>KP290.1～KP290.6</div>
<div class="cell" style="left:533px;top:338.9px;line-height:11.2px">出来形検測<span style="letter-spacing:1px;margin-left:0.500px">(L)</span><br>設計&nbsp; H=200&nbsp; W=1000<br>実測&nbsp; H=200&nbsp; W=1000</div>
<div class="cb" style="left:434.5px;top:350.8px"></div>
<svg class="abs" style="left:434.5px;top:350.8px" width="10" height="10" viewBox="0 0 10 10"><path d="M2.500 4.600L4.500 6.700L7.900 2.700" stroke="#000" stroke-width="1.800" fill="none"/></svg>
<div class="cb" style="left:462.6px;top:350.8px"></div>
<svg class="abs" style="left:462.6px;top:350.8px" width="10" height="10" viewBox="0 0 10 10"><path d="M2.500 4.600L4.500 6.700L7.900 2.700" stroke="#000" stroke-width="1.800" fill="none"/></svg>
<div class="cb" style="left:500.7px;top:350.8px"></div>
<div class="abs" style="left:203px;top:404.5px;width:23px;height:98.6px;background:#d4d0c8;border-right:1px solid #8e8e8e;border-bottom:1px solid #a09c96;box-shadow:inset 1px 1px 0 #f0eee8;box-sizing:border-box"></div>
<div class="cell" style="left:202.300px;width:22px;text-align:center;top:448.0px;font-size:11px">4</div>
<div class="abs" style="left:345.5px;top:404.5px;width:1px;height:98.6px;background:#c0c0c0"></div>
<div class="abs" style="left:357.5px;top:404.5px;width:1px;height:98.6px;background:#c0c0c0"></div>
<div class="abs" style="left:424.5px;top:404.5px;width:1px;height:98.6px;background:#c0c0c0"></div>
<div class="abs" style="left:453.0px;top:404.5px;width:1px;height:98.6px;background:#c0c0c0"></div>
<div class="abs" style="left:481.0px;top:404.5px;width:1px;height:98.6px;background:#c0c0c0"></div>
<div class="abs" style="left:530.0px;top:404.5px;width:1px;height:98.6px;background:#c0c0c0"></div>
<div class="abs" style="left:647.0px;top:404.5px;width:1px;height:98.6px;background:#c0c0c0"></div>
<div class="abs" style="left:808.0px;top:404.5px;width:1px;height:98.6px;background:#c0c0c0"></div>
<div class="abs" style="left:840.5px;top:404.5px;width:1px;height:98.6px;background:#c0c0c0"></div>
<div class="abs" style="left:226px;top:502.6px;width:714px;height:1px;background:#c0c0c0"></div>
<div class="abs" style="left:358.5px;top:404.5px;width:66.5px;height:99.1px;background:#ffff80"></div>
<div class="abs" style="left:648.0px;top:404.5px;width:37.0px;height:99.1px;background:#ffff80"></div>
<div class="abs" style="left:698.0px;top:404.5px;width:72.5px;height:99.1px;background:#ffff80"></div>
<div class="abs" style="left:685.0px;top:405.0px;width:13.0px;height:98.6px;background:#f0f0f0;border-right:1.5px solid #202020;border-bottom:1.5px solid #202020;box-sizing:border-box"></div>
<svg class="abs" style="left:686.8px;top:451.8px" width="8" height="5" viewBox="0 0 8 5"><path d="M1.300 0.700h5.400l-2.700 3.300z" fill="#000"/></svg>
<div class="abs" style="left:770.5px;top:405.0px;width:13.0px;height:98.6px;background:#f0f0f0;border-right:1.5px solid #202020;border-bottom:1.5px solid #202020;box-sizing:border-box"></div>
<svg class="abs" style="left:772.3px;top:451.8px" width="8" height="5" viewBox="0 0 8 5"><path d="M1.300 0.700h5.400l-2.700 3.300z" fill="#000"/></svg>
<svg class="abs" style="left:227.0px;top:417.7px" width="118" height="73" viewBox="0 0 118 73"><g filter="url(#b1)"><rect x="-5" y="-5" width="128" height="83" fill="#94733f"/><polygon points="-5,-5 44,-5 44,0 37.700,17.800 20,78 -5,78" fill="#c4ae8c"/><polygon points="-5,-5 30,-5 20,10 -5,14" fill="#c0a474"/><polygon points="-5,46 22,46 18,78 -5,78" fill="#b89c74"/><polygon points="7,44 28,44 26,49 8,49" fill="#8a7a60"/><polygon points="42,-5 123,-5 123,6 82,4.600 44,4.600" fill="#c8bca4"/><polygon points="44,4.600 55.200,4.600 55.200,78 18,78 37.700,17.800" fill="#6e4c26"/><polygon points="44,4.600 55.200,4.600 55.200,22 40,18" fill="#8a6230"/><polygon points="26,40 54,38 54,78 18,78" fill="#5a4020"/><polygon points="44,4.600 75.300,4.600 75.300,15.300 55.200,17" fill="#5e3e1c"/><polygon points="55.200,17.800 74,27.900 87.900,78 52.700,78" fill="#94733f"/><polygon points="56.500,47 70,47 74,78 55,78" fill="#a07e48"/><polygon points="75.300,4.600 88,10 123,28 123,78 87.900,78 74,27.900" fill="#c89448"/><polygon points="76.500,12 100,22 100,33 78,30" fill="#d29e52"/><polygon points="80.300,34 106.700,35 106.700,40.400 82,40.400" fill="#7a6038"/><polygon points="95,41 113,42 113,58 97,56" fill="#8a6c40"/><polygon points="84,-5 123,-5 123,27 104,18 88,9" fill="#b8a88c"/><polygon points="81.600,-1 123,-1 123,4.200 81.600,4" fill="#2e2a24"/><polygon points="104,-1 123,-1 123,2.100 104,2.100" fill="#1e7a78"/><polygon points="96.700,4.600 123,8 123,17.800 104,14" fill="#9a9080"/><polygon points="112,12 123,14 123,20 113,18" fill="#3a3428"/><polygon points="15.700,2.800 26.400,2.800 26.400,10.300 15.700,10.300" fill="#3a3a38"/></g><rect width="118" height="73" filter="url(#nz)"/><rect width="118" height="73" filter="url(#nz2)" opacity="0.22"/><g filter="url(#b2)"><rect x="6.900" y="22.800" width="20.100" height="22" fill="#1f6c5e"/><rect x="6.900" y="22.800" width="20.100" height="22" fill="none" stroke="#9cc4bc" stroke-width="0.600"/><rect x="12.500" y="23.300" width="14" height="2.200" fill="#a8c8d8"/><rect x="10.500" y="34" width="12.500" height="1.700" fill="#e0d8d8"/><rect x="11" y="39" width="15" height="1.700" fill="#e0d8d8"/><rect x="12.600" y="9.500" width="2.600" height="12.500" fill="#dcd8d0" opacity="0.900"/><ellipse cx="94.100" cy="4.600" rx="2.700" ry="3" fill="none" stroke="#26221e" stroke-width="1.100"/><path d="M63.400 20.300 L74 20.300 L73 30.400 L64 30.400 Z" fill="#2a2a30"/><path d="M62.800 23 L63.500 14 Q68 9 74.700 13 L74.700 24.100 L68 21 Z" fill="#e8e8e4"/><circle cx="69" cy="11.700" r="2.900" fill="#f2f2f2"/><rect x="60.300" y="27.200" width="11.900" height="20.100" fill="#2c2c28"/><rect x="61.500" y="28.300" width="8.800" height="3.200" fill="#c0bcb0"/><rect x="62.800" y="43" width="9" height="4.300" fill="#a8a498"/></g></svg>
<div class="cell" style="left:361px;top:448.3px">埋戻工&nbsp; G</div>
<div class="cell" style="left:650px;top:448.3px">工事</div>
<div class="cell" style="left:699px;top:448.3px;letter-spacing:-0.6px">その 他写真</div>
<div class="cell" style="left:785px;top:448.3px">雑工</div>
<div class="cell" style="left:811px;top:448.3px;letter-spacing:-0.3px">小ｰ29</div>
<div class="cell" style="left:843px;top:448.3px;width:95px;overflow:hidden;letter-spacing:-0.150px">下<span style="margin-right:-3.500px">）</span>KP290.1～KP290.6</div>
<div class="cell" style="left:533px;top:437.5px;line-height:11.2px">出来形検測<span style="letter-spacing:1px;margin-left:0.500px">(L)</span><br>設計&nbsp; H=200&nbsp; W=1000<br>実測&nbsp; H=200&nbsp; W=1000</div>
<div class="cb" style="left:434.5px;top:449.4px"></div>
<svg class="abs" style="left:434.5px;top:449.4px" width="10" height="10" viewBox="0 0 10 10"><path d="M2.500 4.600L4.500 6.700L7.900 2.700" stroke="#000" stroke-width="1.800" fill="none"/></svg>
<div class="cb" style="left:462.6px;top:449.4px"></div>
<svg class="abs" style="left:462.6px;top:449.4px" width="10" height="10" viewBox="0 0 10 10"><path d="M2.500 4.600L4.500 6.700L7.900 2.700" stroke="#000" stroke-width="1.800" fill="none"/></svg>
<div class="cb" style="left:500.7px;top:449.4px"></div>
<div class="abs" style="left:203px;top:503.1px;width:23px;height:98.6px;background:#a0a0a0;border-right:1px solid #8e8e8e;border-bottom:1px solid #a09c96;box-shadow:inset 1px 1px 0 #a0a0a0;box-sizing:border-box"></div>
<div class="cell" style="left:202.300px;width:22px;text-align:center;top:546.6px;font-size:11px">5</div>
<div class="abs" style="left:345.5px;top:503.1px;width:1px;height:98.6px;background:#c0c0c0"></div>
<div class="abs" style="left:357.5px;top:503.1px;width:1px;height:98.6px;background:#c0c0c0"></div>
<div class="abs" style="left:424.5px;top:503.1px;width:1px;height:98.6px;background:#c0c0c0"></div>
<div class="abs" style="left:453.0px;top:503.1px;width:1px;height:98.6px;background:#c0c0c0"></div>
<div class="abs" style="left:481.0px;top:503.1px;width:1px;height:98.6px;background:#c0c0c0"></div>
<div class="abs" style="left:530.0px;top:503.1px;width:1px;height:98.6px;background:#c0c0c0"></div>
<div class="abs" style="left:647.0px;top:503.1px;width:1px;height:98.6px;background:#c0c0c0"></div>
<div class="abs" style="left:808.0px;top:503.1px;width:1px;height:98.6px;background:#c0c0c0"></div>
<div class="abs" style="left:840.5px;top:503.1px;width:1px;height:98.6px;background:#c0c0c0"></div>
<div class="abs" style="left:226px;top:601.2px;width:714px;height:1px;background:#c0c0c0"></div>
<div class="abs" style="left:358.5px;top:503.1px;width:66.5px;height:99.1px;background:#ffff80"></div>
<div class="abs" style="left:648.0px;top:503.1px;width:37.0px;height:99.1px;background:#ffff80"></div>
<div class="abs" style="left:698.0px;top:503.1px;width:72.5px;height:99.1px;background:#ffff80"></div>
<div class="abs" style="left:685.0px;top:503.6px;width:13.0px;height:98.6px;background:#f0f0f0;border-right:1.5px solid #202020;border-bottom:1.5px solid #202020;box-sizing:border-box"></div>
<svg class="abs" style="left:686.8px;top:550.4px" width="8" height="5" viewBox="0 0 8 5"><path d="M1.300 0.700h5.400l-2.700 3.300z" fill="#000"/></svg>
<div class="abs" style="left:770.5px;top:503.6px;width:13.0px;height:98.6px;background:#f0f0f0;border-right:1.5px solid #202020;border-bottom:1.5px solid #202020;box-sizing:border-box"></div>
<svg class="abs" style="left:772.3px;top:550.4px" width="8" height="5" viewBox="0 0 8 5"><path d="M1.300 0.700h5.400l-2.700 3.300z" fill="#000"/></svg>
<svg class="abs" style="left:227.0px;top:516.3px" width="118" height="73" viewBox="0 0 118 73"><g filter="url(#b1)"><rect x="-5" y="-5" width="128" height="83" fill="#a89068"/><polygon points="-5,-5 14,-5 10,78 -5,78" fill="#9c845c"/><polygon points="10,-5 26,-5 26,78 8,78" fill="#b6a078"/><polygon points="88,-5 100,-5 104,78 88,78" fill="#9a7c50"/><polygon points="98,-5 123,-5 123,78 102,78" fill="#7e6038"/><polygon points="108,10 123,14 123,60 110,50" fill="#6e5230"/><polygon points="6,10 12,8 14,50 9,60" fill="#8a724c"/><polygon points="99,-5 106,-5 110,78 102,78" fill="#5e4628"/></g><rect width="118" height="73" filter="url(#nz)"/><rect width="118" height="73" filter="url(#nz2)" opacity="0.22"/><g filter="url(#b2)"><rect x="25.500" y="0" width="64" height="70.500" fill="#3d7c72"/><rect x="25.500" y="0" width="64" height="70.500" fill="none" stroke="#8ab8b0" stroke-width="0.800"/><rect x="44.300" y="0.600" width="44.200" height="6" fill="#dfe8ff"/><path d="M46 2.300h41M52 4.800h35" stroke="#4a90f0" stroke-width="1.100" stroke-dasharray="2.200 0.700"/><path d="M26 7.500h63M26 14h63M26 20.300h63" stroke="#b8d8d0" stroke-width="0.500"/><text x="27.300" y="6.300" font-family="'Liberation Sans','IPAGothic',sans-serif" font-size="4.800" fill="#eef6f2">工事名</text><text x="27.300" y="12.800" font-family="'Liberation Sans','IPAGothic',sans-serif" font-size="4.800" fill="#eef6f2">工　種 埋戻工</text><text x="27.300" y="19.200" font-family="'Liberation Sans','IPAGothic',sans-serif" font-size="4.800" fill="#eef6f2">測　点 No.25</text><rect x="39.100" y="22.600" width="37.500" height="5.600" fill="#eef0ee"/><text x="40" y="27.300" font-family="'Liberation Sans','IPAGothic',sans-serif" font-size="4.600" fill="#30403c" textLength="35.500" lengthAdjust="spacingAndGlyphs">埋戻工出来形検測</text><path d="M37 31 L40 33 L47 52 L64 52 L72 33 L76 31 M42 52 L42 68 M80 33 L80 66 M40 55 L62 55 M46 52 L46 66 M62 52 L62 66 M40 60 L64 60 M64 66 L88 66" stroke="#d8ece6" stroke-width="0.600" fill="none"/><path d="M47 52 L64 52 L62 56 L49 56 Z" fill="#a8c8c0" opacity="0.600"/><text x="28" y="41" font-family="'Liberation Sans',sans-serif" font-size="3" fill="#d8ece6">t=400</text><text x="28" y="45.500" font-family="'Liberation Sans',sans-serif" font-size="3" fill="#d8ece6">(t=404)</text><text x="28" y="53" font-family="'Liberation Sans',sans-serif" font-size="3" fill="#d8ece6">L=1000</text><text x="28" y="58.500" font-family="'Liberation Sans','IPAGothic',sans-serif" font-size="3.400" fill="#d8ece6">(実)</text><text x="28" y="68" font-family="'Liberation Sans',sans-serif" font-size="3" fill="#d8ece6">(2161)</text><text x="74.500" y="46" font-family="'Liberation Sans',sans-serif" font-size="4.200" fill="#d8ece6">1:1</text><text x="73" y="51.500" font-family="'Liberation Sans',sans-serif" font-size="3.600" fill="#d8ece6">(1:1)</text><text x="66" y="69" font-family="'Liberation Sans',sans-serif" font-size="4.200" fill="#d8ece6">GL.000</text></g></svg>
<div class="cell" style="left:361px;top:546.9px">埋戻工&nbsp; G</div>
<div class="cell" style="left:650px;top:546.9px">工事</div>
<div class="cell" style="left:699px;top:546.9px;letter-spacing:-0.6px">その 他写真</div>
<div class="cell" style="left:785px;top:546.9px">雑工</div>
<div class="cell" style="left:811px;top:546.9px;letter-spacing:-0.3px">小ｰ29</div>
<div class="cell" style="left:843px;top:546.9px;width:95px;overflow:hidden;letter-spacing:-0.150px">下<span style="margin-right:-3.500px">）</span>KP290.1～KP290.6</div>
<div class="cell" style="left:533px;top:536.1px;line-height:11.2px">出来形検測<span style="letter-spacing:1px;margin-left:0.500px">(L)</span><br>設計&nbsp; H=200&nbsp; W=1000<br>実測&nbsp; H=200&nbsp; W=1000</div>
<div class="cb" style="left:434.5px;top:548.0px"></div>
<svg class="abs" style="left:434.5px;top:548.0px" width="10" height="10" viewBox="0 0 10 10"><path d="M2.500 4.600L4.500 6.700L7.900 2.700" stroke="#000" stroke-width="1.800" fill="none"/></svg>
<div class="cb" style="left:462.6px;top:548.0px"></div>
<svg class="abs" style="left:462.6px;top:548.0px" width="10" height="10" viewBox="0 0 10 10"><path d="M2.500 4.600L4.500 6.700L7.900 2.700" stroke="#000" stroke-width="1.800" fill="none"/></svg>
<div class="cb" style="left:500.7px;top:548.0px"></div>
<div class="abs" style="left:226px;top:503.1px;width:120px;height:98.6px;border:2px solid #000;box-sizing:border-box"></div>
<div class="abs" style="left:358.5px;top:206.8px;width:66.5px;height:1px;background:#d6d6a8"></div>
<div class="abs" style="left:648.0px;top:206.8px;width:37.0px;height:1px;background:#d6d6a8"></div>
<div class="abs" style="left:698.0px;top:206.8px;width:72.5px;height:1px;background:#d6d6a8"></div>
<div class="abs" style="left:358.5px;top:305.4px;width:66.5px;height:1px;background:#d6d6a8"></div>
<div class="abs" style="left:648.0px;top:305.4px;width:37.0px;height:1px;background:#d6d6a8"></div>
<div class="abs" style="left:698.0px;top:305.4px;width:72.5px;height:1px;background:#d6d6a8"></div>
<div class="abs" style="left:358.5px;top:404.0px;width:66.5px;height:1px;background:#d6d6a8"></div>
<div class="abs" style="left:648.0px;top:404.0px;width:37.0px;height:1px;background:#d6d6a8"></div>
<div class="abs" style="left:698.0px;top:404.0px;width:72.5px;height:1px;background:#d6d6a8"></div>
<div class="abs" style="left:358.5px;top:502.6px;width:66.5px;height:1px;background:#d6d6a8"></div>
<div class="abs" style="left:648.0px;top:502.6px;width:37.0px;height:1px;background:#d6d6a8"></div>
<div class="abs" style="left:698.0px;top:502.6px;width:72.5px;height:1px;background:#d6d6a8"></div>
<div class="abs" style="left:358.5px;top:601.2px;width:66.5px;height:1px;background:#d6d6a8"></div>
<div class="abs" style="left:648.0px;top:601.2px;width:37.0px;height:1px;background:#d6d6a8"></div>
<div class="abs" style="left:698.0px;top:601.2px;width:72.5px;height:1px;background:#d6d6a8"></div>
<div class="abs" style="left:203px;top:664px;width:737px;height:12px;background:#f8f8f8"></div>
<div class="abs" style="left:215px;top:664px;width:334.500px;height:11px;background:#f0f0f0;border-right:1.500px solid #606060;border-bottom:1px solid #808080;box-shadow:inset 1px 1px 0 #fff;box-sizing:border-box"></div>
<div class="abs" style="left:203px;top:664px;width:12px;height:11px;background:#f0f0f0;border-right:1px solid #a0a0a0;border-bottom:1px solid #a0a0a0;box-sizing:border-box"></div>
<div class="abs" style="left:206px;top:667px;width:0;height:0;border-top:3px solid transparent;border-bottom:3px solid transparent;border-right:4px solid #000"></div>
<div class="abs" style="left:926.500px;top:664px;width:11.500px;height:11.500px;background:#f0f0f0;border-left:1px solid #fff;border-right:1px solid #a0a0a0;border-bottom:1px solid #a0a0a0;box-sizing:border-box"></div>
<div class="abs" style="left:930.500px;top:666.800px;width:0;height:0;border-top:3px solid transparent;border-bottom:3px solid transparent;border-left:4px solid #000"></div>
<div class="abs" style="left:203px;top:675px;width:346px;height:1px;background:#9a9a9a"></div>
<div class="abs" style="left:201px;top:676px;width:739px;height:1px;background:#fcfcfc"></div>
<div class="abs" style="left:201px;top:677px;width:739px;height:1px;background:#a8a8a8"></div>
<div class="abs" style="left:201px;top:678px;width:739px;height:1px;background:#fcfcfc"></div>
<div class="abs" style="left:201.5px;top:680.500px;width:392.5px;height:29.500px;background:#f0f0f0;border-top:1.300px solid #7a7a7a;border-left:1px solid #808080;border-bottom:1px solid #fff;border-right:1px solid #fff;box-sizing:border-box"></div>
<div class="abs" style="left:598.0px;top:680.500px;width:82.5px;height:29.500px;background:#f0f0f0;border-top:1.300px solid #7a7a7a;border-left:1px solid #808080;border-bottom:1px solid #fff;border-right:1px solid #fff;box-sizing:border-box"></div>
<div class="abs" style="left:684.0px;top:680.500px;width:256.0px;height:29.500px;background:#f0f0f0;border-top:1.300px solid #7a7a7a;border-left:1px solid #808080;border-bottom:1px solid #fff;border-right:1px solid #fff;box-sizing:border-box"></div>
<div class="abs" style="left:2px;top:709px;width:938px;height:2px;background:#ececec"></div>
<div class="abs" style="left:2px;top:711px;width:938px;height:1px;background:#b2b2b2"></div>
<div class="abs" style="left:2px;top:712px;width:938px;height:1px;background:#c2c2c2"></div>
<div class="abs" style="left:2px;top:713px;width:938px;height:1px;background:#e4e4e4"></div>
<div class="abs" style="left:2px;top:714px;width:938px;height:6px;background:#f2f2f2"></div>
<div class="abs" style="left:2.500px;top:714px;font-size:11px;line-height:11px;white-space:nowrap;letter-spacing:-0.150px">10:590.1～590.2</div>
<div class="abs" style="left:0;top:0;width:940px;height:1px;background:#7a7aaa"></div><div class="abs" style="left:0;top:1px;width:940px;height:1px;background:#a6a6c8"></div><div class="abs" style="left:0;top:2px;width:1px;height:29px;background:#a8a8c8"></div><div class="abs" style="left:1px;top:2px;width:1px;height:29px;background:#9090b8"></div>
<div class="abs" style="left:0;top:31px;width:1px;height:691px;background:#8c8cb8"></div><div class="abs" style="left:1px;top:31px;width:1px;height:691px;background:#4c4c8c"></div>
<div class="abs" style="left:0;top:719px;width:940px;height:1px;background:#a4a4c4"></div><div class="abs" style="left:0;top:720px;width:940px;height:2px;background:#66669c"></div>
<div class="abs" style="left:938.500px;top:0;width:1.500px;height:722px;background:#40407c"></div>
</div></body></html>
